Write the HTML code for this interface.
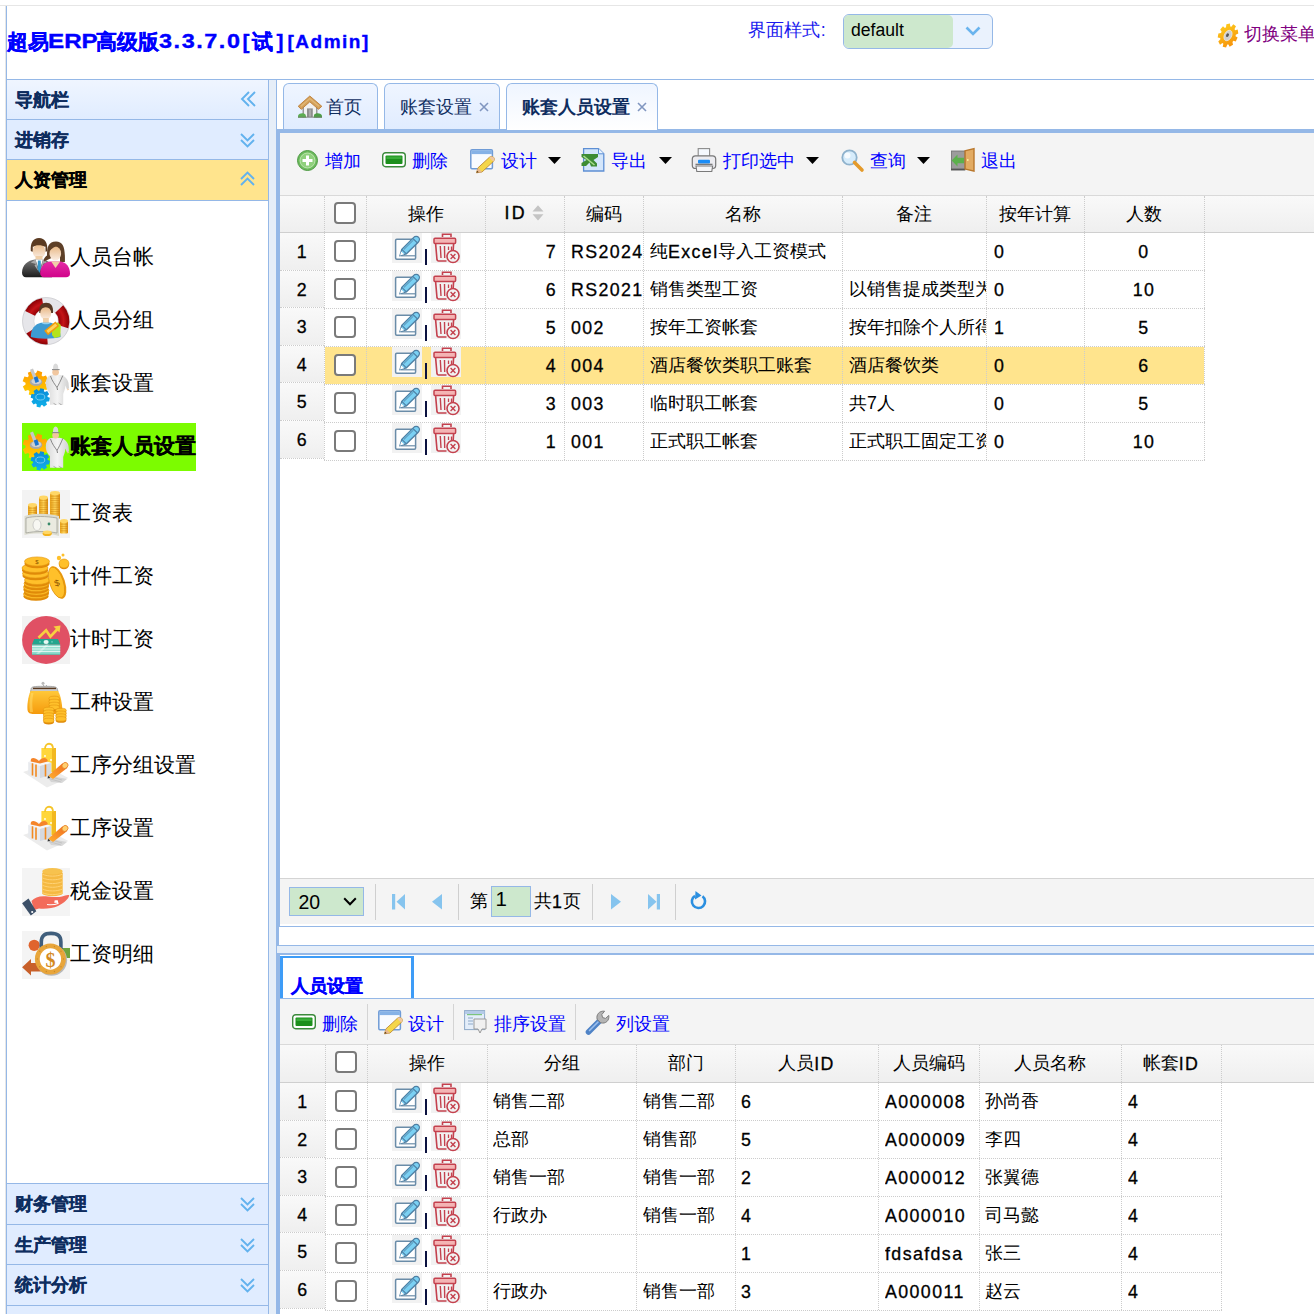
<!DOCTYPE html><html><head><meta charset="utf-8"><style>
html,body{margin:0;padding:0;width:1314px;height:1314px;overflow:hidden;background:#fff;font-family:"Liberation Sans",sans-serif;}
.t{position:absolute;white-space:nowrap;}
svg{overflow:visible}
</style></head><body>
<div style="position:absolute;left:0px;top:5px;width:1314px;height:1px;background:#e6e6e6"></div>
<div style="position:absolute;left:5px;top:5px;width:1px;height:1309px;background:#e6e6e6"></div>
<div style="position:absolute;left:6px;top:6px;width:1px;height:1308px;background:#95b8e7"></div>
<div style="position:absolute;left:6px;top:79px;width:1308px;height:1px;background:#95b8e7"></div>
<div style="position:absolute;white-space:nowrap;font-weight:bold;color:#0000ff;transform-origin:0 0;-webkit-text-stroke:0.35px #0000ff;left:7px;top:31px;font-size:21px;line-height:21px">超易</div>
<div style="position:absolute;white-space:nowrap;font-weight:bold;color:#0000ff;transform-origin:0 0;-webkit-text-stroke:0.35px #0000ff;left:47.7px;top:30.5px;font-size:19.5px;line-height:21px;transform:scaleX(1.24)">ERP</div>
<div style="position:absolute;white-space:nowrap;font-weight:bold;color:#0000ff;transform-origin:0 0;-webkit-text-stroke:0.35px #0000ff;left:95.5px;top:31px;font-size:21px;line-height:21px">高级版</div>
<div style="position:absolute;white-space:nowrap;font-weight:bold;color:#0000ff;transform-origin:0 0;-webkit-text-stroke:0.35px #0000ff;left:159px;top:30.5px;font-size:19.5px;line-height:21px;letter-spacing:1.3px;transform:scaleX(1.2)">3.3.7.0</div>
<div style="position:absolute;white-space:nowrap;font-weight:bold;color:#0000ff;transform-origin:0 0;-webkit-text-stroke:0.35px #0000ff;left:242.5px;top:30.5px;font-size:21px;line-height:21px;letter-spacing:3px">[试]</div>
<div style="position:absolute;white-space:nowrap;font-weight:bold;color:#0000ff;transform-origin:0 0;-webkit-text-stroke:0.35px #0000ff;left:287.5px;top:30.5px;font-size:19px;line-height:21px;letter-spacing:1.5px">[Admin]</div>
<div class="t" style="left:747.5px;top:22px;font-size:17.8px;line-height:17.8px;color:#1a1aee;letter-spacing:0.3px">界面样式:</div>
<div style="position:absolute;left:843px;top:14px;width:148px;height:33px;border:1px solid #95b8e7;border-radius:6px;background:#eaf2fd;box-sizing:content-box"></div>
<div style="position:absolute;left:844px;top:15px;width:109px;height:33px;background:#cde8cd;border-radius:5px 5px 5px 5px"></div>
<div class="t" style="left:851px;top:22px;font-size:17.6px;line-height:17.6px;color:#000">default</div>
<svg style="position:absolute;left:965px;top:26px" width="16" height="10" viewBox="0 0 16 10"><path d="M1.5 1.5 L8 8 L14.5 1.5" fill="none" stroke="#6ab4ee" stroke-width="2.6"/></svg>
<svg style="position:absolute;left:1216px;top:23px" width="24" height="25" viewBox="0 0 24 25"><defs><linearGradient id="gGear" x1="0" y1="0" x2="1" y2="1"><stop offset="0" stop-color="#ffd21e"/><stop offset="1" stop-color="#f58a0a"/></linearGradient></defs>
<g transform="translate(12,12.5) rotate(25) scale(0.78,1)"><path d="M9.15,-2.55 L12.31,-2.17 L12.31,2.17 L9.15,2.55 L8.65,3.92 L10.83,6.25 L8.03,9.58 L5.37,7.84 L4.10,8.57 L4.28,11.75 L0.00,12.50 L-0.93,9.45 L-2.36,9.20 L-4.28,11.75 L-8.03,9.58 L-6.79,6.65 L-7.72,5.53 L-10.83,6.25 L-12.31,2.17 L-9.47,0.73 L-9.47,-0.73 L-12.31,-2.17 L-10.83,-6.25 L-7.72,-5.53 L-6.79,-6.65 L-8.03,-9.58 L-4.28,-11.75 L-2.36,-9.20 L-0.93,-9.45 L-0.00,-12.50 L4.28,-11.75 L4.10,-8.57 L5.37,-7.84 L8.03,-9.58 L10.83,-6.25 L8.65,-3.92Z" fill="url(#gGear)"/></g>
<ellipse cx="12" cy="12.5" rx="3.6" ry="5.6" transform="rotate(28 12 12.5)" fill="#cfcfcf" stroke="#f0f0f0" stroke-width=".6"/>
<ellipse cx="11.5" cy="12.2" rx="1.3" ry="2" transform="rotate(28 11.5 12.2)" fill="#555"/></svg>
<div class="t" style="left:1244px;top:26px;font-size:17.8px;line-height:17.8px;color:#800080">切换菜单</div>
<div style="position:absolute;left:7px;top:80px;width:261px;height:39px;background:linear-gradient(to bottom,#eff5ff 0,#e0ecff 100%)"></div>
<div style="position:absolute;left:7px;top:119px;width:261px;height:1px;background:#95b8e7"></div>
<div class="t" style="left:15px;top:91.5px;font-size:17.7px;line-height:17.7px;font-weight:bold;color:#0e2d5f;-webkit-text-stroke:0.3px #0e2d5f">导航栏</div>
<svg style="position:absolute;left:240px;top:91px" width="17" height="16" viewBox="0 0 17 16"><path d="M9 1 L2 8 L9 15 M15 1 L8 8 L15 15" fill="none" stroke="#62b2ee" stroke-width="1.9"/></svg>
<div style="position:absolute;left:7px;top:120px;width:261px;height:39px;background:#e0ecff"></div>
<div style="position:absolute;left:7px;top:159px;width:261px;height:1px;background:#95b8e7"></div>
<div class="t" style="left:15px;top:131.5px;font-size:17.7px;line-height:17.7px;font-weight:bold;color:#0e2d5f;-webkit-text-stroke:0.3px #0e2d5f">进销存</div>
<svg style="position:absolute;left:240px;top:133px" width="15" height="15" viewBox="0 0 15 15"><path d="M1 1 L7.5 7.5 L14 1 M1 7 L7.5 13.5 L14 7" fill="none" stroke="#62b2ee" stroke-width="1.9"/></svg>
<div style="position:absolute;left:7px;top:160px;width:261px;height:40px;background:#ffe48d"></div>
<div style="position:absolute;left:7px;top:200px;width:261px;height:1px;background:#95b8e7"></div>
<div class="t" style="left:15px;top:171.5px;font-size:17.7px;line-height:17.7px;font-weight:bold;color:#000;-webkit-text-stroke:0.3px #000">人资管理</div>
<svg style="position:absolute;left:240px;top:171px" width="15" height="15" viewBox="0 0 15 15"><path d="M1 8 L7.5 1.5 L14 8 M1 14 L7.5 7.5 L14 14" fill="none" stroke="#62b2ee" stroke-width="1.9"/></svg>
<div style="position:absolute;left:7px;top:1184px;width:261px;height:40px;background:#e0ecff"></div>
<div style="position:absolute;left:7px;top:1224px;width:261px;height:1px;background:#95b8e7"></div>
<div class="t" style="left:15px;top:1195.5px;font-size:17.7px;line-height:17.7px;font-weight:bold;color:#0e2d5f;-webkit-text-stroke:0.3px #0e2d5f">财务管理</div>
<svg style="position:absolute;left:240px;top:1197px" width="15" height="15" viewBox="0 0 15 15"><path d="M1 1 L7.5 7.5 L14 1 M1 7 L7.5 13.5 L14 7" fill="none" stroke="#62b2ee" stroke-width="1.9"/></svg>
<div style="position:absolute;left:7px;top:1225px;width:261px;height:39px;background:#e0ecff"></div>
<div style="position:absolute;left:7px;top:1264px;width:261px;height:1px;background:#95b8e7"></div>
<div class="t" style="left:15px;top:1236.5px;font-size:17.7px;line-height:17.7px;font-weight:bold;color:#0e2d5f;-webkit-text-stroke:0.3px #0e2d5f">生产管理</div>
<svg style="position:absolute;left:240px;top:1238px" width="15" height="15" viewBox="0 0 15 15"><path d="M1 1 L7.5 7.5 L14 1 M1 7 L7.5 13.5 L14 7" fill="none" stroke="#62b2ee" stroke-width="1.9"/></svg>
<div style="position:absolute;left:7px;top:1265px;width:261px;height:40px;background:#e0ecff"></div>
<div style="position:absolute;left:7px;top:1305px;width:261px;height:1px;background:#95b8e7"></div>
<div class="t" style="left:15px;top:1276.5px;font-size:17.7px;line-height:17.7px;font-weight:bold;color:#0e2d5f;-webkit-text-stroke:0.3px #0e2d5f">统计分析</div>
<svg style="position:absolute;left:240px;top:1278px" width="15" height="15" viewBox="0 0 15 15"><path d="M1 1 L7.5 7.5 L14 1 M1 7 L7.5 13.5 L14 7" fill="none" stroke="#62b2ee" stroke-width="1.9"/></svg>
<div style="position:absolute;left:7px;top:1306px;width:261px;height:8px;background:#e0ecff"></div>
<div style="position:absolute;left:7px;top:1183px;width:261px;height:1px;background:#95b8e7"></div>
<div style="position:absolute;left:268px;top:80px;width:1px;height:1234px;background:#95b8e7"></div>
<div style="position:absolute;left:269px;top:80px;width:7px;height:1234px;background:#e6eef8"></div>
<svg width="0" height="0" style="position:absolute"><defs>
<linearGradient id="gSkin" x1="0" y1="0" x2="0" y2="1"><stop offset="0" stop-color="#e8b987"/><stop offset="1" stop-color="#fbeee4"/></linearGradient>
<linearGradient id="gSuit" x1="0" y1="0" x2="0" y2="1"><stop offset="0" stop-color="#777"/><stop offset="1" stop-color="#1b1b1b"/></linearGradient>
<linearGradient id="gGold" x1="0" y1="0" x2="1" y2="0"><stop offset="0" stop-color="#e9a21a"/><stop offset=".5" stop-color="#ffd55a"/><stop offset="1" stop-color="#d98a10"/></linearGradient>
<linearGradient id="gGoldV" x1="0" y1="0" x2="0" y2="1"><stop offset="0" stop-color="#ffce4a"/><stop offset="1" stop-color="#e9930f"/></linearGradient>
<linearGradient id="gOrGear" x1="0" y1="0" x2="0" y2="1"><stop offset="0" stop-color="#ff9a00"/><stop offset="1" stop-color="#ffd000"/></linearGradient>
<linearGradient id="gBlGear" x1="0" y1="0" x2="0" y2="1"><stop offset="0" stop-color="#0a8ad8"/><stop offset="1" stop-color="#10b0e8"/></linearGradient>
<linearGradient id="gWhite" x1="0" y1="0" x2="1" y2="0"><stop offset="0" stop-color="#d8d8d8"/><stop offset=".5" stop-color="#f4f4f4"/><stop offset="1" stop-color="#d0d0d0"/></linearGradient>
<linearGradient id="gMag" x1="0" y1="0" x2="0" y2="1"><stop offset="0" stop-color="#e42aa6"/><stop offset="1" stop-color="#d1048a"/></linearGradient>
<linearGradient id="gPurse" x1="0" y1="0" x2="0" y2="1"><stop offset="0" stop-color="#ffc83a"/><stop offset="1" stop-color="#f59a0c"/></linearGradient><linearGradient id="gPencil" x1="0" y1="1" x2="1" y2="0"><stop offset="0" stop-color="#ffb030"/><stop offset="1" stop-color="#f06a20"/></linearGradient>
<radialGradient id="gRed" cx="24.1" cy="24.1" r="23.3" gradientUnits="userSpaceOnUse"><stop offset=".5" stop-color="#8e0006"/><stop offset=".75" stop-color="#c41418"/><stop offset="1" stop-color="#8a0004"/></radialGradient>
<linearGradient id="gPanel" x1="0" y1="0" x2="0" y2="1"><stop offset="0" stop-color="#eff5ff"/><stop offset="1" stop-color="#e0ecff"/></linearGradient>
</defs></svg>
<svg style="position:absolute;left:22px;top:234px" width="48" height="48" viewBox="0 0 48 48">
<path d="M8.8,17 C8.3,9 11,4.1 17,4.1 C23,4.1 25.8,9 25.4,17 L23.5,18 L23.5,12.5 C21,11 15,10.5 10.8,12.5 L10.8,18Z" fill="#5a3b22"/>
<ellipse cx="17" cy="17.2" rx="6.3" ry="7.3" fill="url(#gSkin)"/>
<path d="M10.8,13 C13,10.8 20,10.6 23.4,13 L23.5,10 C21,7.5 13,7.5 10.8,10Z" fill="#5a3b22"/>
<rect x="13.5" y="22" width="7" height="4" fill="#f0cfa8"/>
<path d="M0,38.5 C0,31 6,26.2 13,25.4 L21,25.4 C26,26 30,30 30,36 L30,43.3 L4,43.3 C1.5,43.3 0,41.5 0,38.5Z" fill="url(#gSuit)"/>
<path d="M13.5,25.4 L17.3,37 L21,25.4Z" fill="#fff"/>
<path d="M8.8,28.5 L13.5,25.4 L16.3,37 L12.5,31.5 L14,30Z M25,28.5 L21,25.4 L18.3,37 L22,31.5 L20.5,30Z" fill="#a9a9a9"/>
<path d="M15.9,26.5 L18.7,26.5 L19,34.5 L17.3,39 L15.6,34.5Z" fill="#3597c9"/>
<path d="M22,27.5 C21,25 23.5,22.5 25,21.5 C25,13 26.5,7.5 34,7.5 C41.5,7.5 43.3,14 42.9,28 L38,28 L38,20Z" fill="#5e4028"/>
<ellipse cx="33.3" cy="19.5" rx="5.8" ry="7" fill="url(#gSkin)"/>
<path d="M27.3,17.5 C29,14.5 33,12.8 36.5,10.5 L38.5,14 C38,10 35,9 32,9.5 C29,10.5 27.3,13 27.3,17.5Z" fill="#5e4028"/>
<path d="M18.2,39 C18.2,32 23,28 28,27.5 L38.5,27.5 C44,28 48,33 48,39.5 C48,42 46.5,43.3 44,43.3 L22,43.3 C19.5,43.3 18.2,41.5 18.2,39Z" fill="url(#gMag)"/>
<path d="M29.2,27.5 L33.5,34 L38.2,27.5Z" fill="#f0cfa8"/>
</svg>
<div class="t" style="left:69.5px;top:246.5px;font-size:20.6px;line-height:20.6px;color:#000">人员台帐</div>
<svg style="position:absolute;left:22px;top:297px" width="48" height="48" viewBox="0 0 48 48"><circle cx="24.1" cy="24.1" r="23.6" fill="#e6e6ea" stroke="#c4c4c8" stroke-width=".7"/><circle cx="24.1" cy="24.1" r="12.2" fill="#fff" stroke="#d0d0d4" stroke-width=".6"/><path d="M3.16,13.89 A23.3,23.3 0 0 1 20.05,1.15 L21.95,11.89 A12.4,12.4 0 0 0 12.95,18.66 Z" fill="url(#gRed)"/><path d="M41.14,8.21 A23.3,23.3 0 0 1 46.26,31.30 L35.89,27.93 A12.4,12.4 0 0 0 33.17,15.64 Z" fill="url(#gRed)"/><path d="M25.73,47.34 A23.3,23.3 0 0 1 4.34,36.45 L13.58,30.67 A12.4,12.4 0 0 0 24.96,36.47 Z" fill="url(#gRed)"/><path d="M17.3,16 C16.8,9 19,5.8 24.1,5.8 C29.2,5.8 31.5,9 31,16Z" fill="#573a25"/>
<ellipse cx="23.7" cy="16.3" rx="5.5" ry="6.3" fill="url(#gSkin)"/>
<path d="M18.5,12 C21,9.8 27,9.8 29.3,12 L29.5,9.5 C27,7 21,7 18.3,9.5Z" fill="#573a25"/>
<rect x="21" y="21" width="5.8" height="5" fill="#f0cfa8"/>
<path d="M8.8,40 C8.8,32 13,27 19,25.8 L29,25.8 C34,27 38.3,32 38.6,40 C30,42.3 17,42.3 8.8,40Z" fill="#3d9ad2"/>
<path d="M19.5,25.8 C21,27.8 27,27.8 28.5,25.8Z" fill="#8fd0f2"/>
<path d="M30,27 L36,25.5 L38.8,28 L38.3,39.5 L32.5,41 L30,38Z" fill="#b4e41c"/>
<path d="M22.2,33.8 L33.5,24.6 L37.2,29 L26,38.3Z" fill="#f39a0c"/>
<path d="M24.4,33.7 L33.4,26.5 L35.2,28.7 L26.2,35.9Z" fill="#ffd35c"/>
</svg>
<div class="t" style="left:69.5px;top:309.5px;font-size:20.6px;line-height:20.6px;color:#000">人员分组</div>
<svg style="position:absolute;left:22px;top:360px" width="48" height="48" viewBox="0 0 48 48"><path d="M23.49,23.74 L26.35,25.29 L24.61,30.05 L21.42,29.40 L20.26,30.67 L21.18,33.79 L16.58,35.93 L14.79,33.22 L13.06,33.29 L11.51,36.15 L6.75,34.41 L7.40,31.22 L6.13,30.06 L3.01,30.98 L0.87,26.38 L3.58,24.59 L3.51,22.86 L0.65,21.31 L2.39,16.55 L5.58,17.20 L6.74,15.93 L5.82,12.81 L10.42,10.67 L12.21,13.38 L13.94,13.31 L15.49,10.45 L20.25,12.19 L19.60,15.38 L20.87,16.54 L23.99,15.62 L26.13,20.22 L23.42,22.01Z" fill="url(#gOrGear)"/><path d="M25.66,37.01 L27.90,37.84 L27.16,41.51 L24.77,41.39 L24.06,42.45 L25.06,44.61 L21.94,46.68 L20.34,44.91 L19.09,45.16 L18.26,47.40 L14.59,46.66 L14.71,44.27 L13.65,43.56 L11.49,44.56 L9.42,41.44 L11.19,39.84 L10.94,38.59 L8.70,37.76 L9.44,34.09 L11.83,34.21 L12.54,33.15 L11.54,30.99 L14.66,28.92 L16.26,30.69 L17.51,30.44 L18.34,28.20 L22.01,28.94 L21.89,31.33 L22.95,32.04 L25.11,31.04 L27.18,34.16 L25.41,35.76Z" fill="url(#gBlGear)"/><ellipse cx="18.3" cy="37" rx="4.5" ry="3" fill="none" stroke="#8fd4f2" stroke-width=".8"/><ellipse cx="14" cy="22" rx="6.3" ry="4" fill="#a9a9a9"/><ellipse cx="14.3" cy="21.3" rx="4.8" ry="2.8" fill="#d0d0d0"/><path d="M8,9.8 L11,8.4 L16,21 L13,22.4Z" fill="#c8c8c8"/><path d="M11.8,17.6 L15.3,16.2 L17,21.5 L13.5,23Z" fill="#1a74d0"/><path d="M24,26 C23,19 26,15 31,14.8 L37,14.8 C42,15 45.5,18.5 46.5,23 L47,28.5 L44.8,29.2 L43.5,25.5 C43,30 41.8,32 41.2,34 L41.2,44.7 L28,44.7 L28,33 C26,31.5 24.5,29 24,26Z" fill="url(#gWhite)"/><circle cx="33.6" cy="12.2" r="3.3" fill="#f1c7a0"/><path d="M31,9.5 C30.8,5.5 32,3.5 33.6,3.5 C35.3,3.5 36.5,5.5 36.3,9.5Z" fill="#dadada"/><path d="M30,9.6 L37.6,9.6" stroke="#8a8a8a" stroke-width="1.1"/><path d="M28.5,16 C30,21 33,24.5 35,27.5 C36.5,25 39,20 40.8,15.5" fill="none" stroke="#707070" stroke-width=".8"/><path d="M35,27.5 L35.5,30" stroke="#707070" stroke-width=".9"/><path d="M45,28.5 L47.3,29.3 L45.6,30.6Z" fill="#f1c7a0"/><path d="M30.5,42.5 L33,44.8 L35,44.8Z M36,42.5 L38.5,44.8 L40.5,44.8Z" fill="#9a9a9a"/></svg>
<div class="t" style="left:69.5px;top:372.5px;font-size:20.6px;line-height:20.6px;color:#000">账套设置</div>
<div style="position:absolute;left:22px;top:423px;width:174px;height:48px;background:#7cfc00"></div>
<svg style="position:absolute;left:22px;top:423px" width="48" height="48" viewBox="0 0 48 48"><path d="M23.49,23.74 L26.35,25.29 L24.61,30.05 L21.42,29.40 L20.26,30.67 L21.18,33.79 L16.58,35.93 L14.79,33.22 L13.06,33.29 L11.51,36.15 L6.75,34.41 L7.40,31.22 L6.13,30.06 L3.01,30.98 L0.87,26.38 L3.58,24.59 L3.51,22.86 L0.65,21.31 L2.39,16.55 L5.58,17.20 L6.74,15.93 L5.82,12.81 L10.42,10.67 L12.21,13.38 L13.94,13.31 L15.49,10.45 L20.25,12.19 L19.60,15.38 L20.87,16.54 L23.99,15.62 L26.13,20.22 L23.42,22.01Z" fill="url(#gOrGear)"/><path d="M25.66,37.01 L27.90,37.84 L27.16,41.51 L24.77,41.39 L24.06,42.45 L25.06,44.61 L21.94,46.68 L20.34,44.91 L19.09,45.16 L18.26,47.40 L14.59,46.66 L14.71,44.27 L13.65,43.56 L11.49,44.56 L9.42,41.44 L11.19,39.84 L10.94,38.59 L8.70,37.76 L9.44,34.09 L11.83,34.21 L12.54,33.15 L11.54,30.99 L14.66,28.92 L16.26,30.69 L17.51,30.44 L18.34,28.20 L22.01,28.94 L21.89,31.33 L22.95,32.04 L25.11,31.04 L27.18,34.16 L25.41,35.76Z" fill="url(#gBlGear)"/><ellipse cx="18.3" cy="37" rx="4.5" ry="3" fill="none" stroke="#8fd4f2" stroke-width=".8"/><ellipse cx="14" cy="22" rx="6.3" ry="4" fill="#a9a9a9"/><ellipse cx="14.3" cy="21.3" rx="4.8" ry="2.8" fill="#d0d0d0"/><path d="M8,9.8 L11,8.4 L16,21 L13,22.4Z" fill="#c8c8c8"/><path d="M11.8,17.6 L15.3,16.2 L17,21.5 L13.5,23Z" fill="#1a74d0"/><path d="M24,26 C23,19 26,15 31,14.8 L37,14.8 C42,15 45.5,18.5 46.5,23 L47,28.5 L44.8,29.2 L43.5,25.5 C43,30 41.8,32 41.2,34 L41.2,44.7 L28,44.7 L28,33 C26,31.5 24.5,29 24,26Z" fill="url(#gWhite)"/><circle cx="33.6" cy="12.2" r="3.3" fill="#f1c7a0"/><path d="M31,9.5 C30.8,5.5 32,3.5 33.6,3.5 C35.3,3.5 36.5,5.5 36.3,9.5Z" fill="#dadada"/><path d="M30,9.6 L37.6,9.6" stroke="#8a8a8a" stroke-width="1.1"/><path d="M28.5,16 C30,21 33,24.5 35,27.5 C36.5,25 39,20 40.8,15.5" fill="none" stroke="#707070" stroke-width=".8"/><path d="M35,27.5 L35.5,30" stroke="#707070" stroke-width=".9"/><path d="M45,28.5 L47.3,29.3 L45.6,30.6Z" fill="#f1c7a0"/><path d="M30.5,42.5 L33,44.8 L35,44.8Z M36,42.5 L38.5,44.8 L40.5,44.8Z" fill="#9a9a9a"/></svg>
<div class="t" style="left:69.5px;top:435.5px;font-size:20.6px;line-height:20.6px;font-weight:bold;color:#000;-webkit-text-stroke:0.3px #000">账套人员设置</div>
<svg style="position:absolute;left:22px;top:490px" width="48" height="48" viewBox="0 0 48 48"><rect x="0" y="0" width="48" height="48" fill="#f3f3f3"/><rect x="6" y="15" width="9" height="12" rx="1.3499999999999999" fill="url(#gGold)"/><line x1="6.5" y1="16.0" x2="14.5" y2="16.0" stroke="#c47a08" stroke-width="0.6" opacity=".7"/><line x1="6.5" y1="18.2" x2="14.5" y2="18.2" stroke="#c47a08" stroke-width="0.6" opacity=".7"/><line x1="6.5" y1="20.4" x2="14.5" y2="20.4" stroke="#c47a08" stroke-width="0.6" opacity=".7"/><line x1="6.5" y1="22.6" x2="14.5" y2="22.6" stroke="#c47a08" stroke-width="0.6" opacity=".7"/><line x1="6.5" y1="24.8" x2="14.5" y2="24.8" stroke="#c47a08" stroke-width="0.6" opacity=".7"/><ellipse cx="10.5" cy="15" rx="4.5" ry="2" fill="#ffd766"/><rect x="17" y="7.5" width="9" height="19.5" rx="1.3499999999999999" fill="url(#gGold)"/><line x1="17.5" y1="8.5" x2="25.5" y2="8.5" stroke="#c47a08" stroke-width="0.6" opacity=".7"/><line x1="17.5" y1="10.7" x2="25.5" y2="10.7" stroke="#c47a08" stroke-width="0.6" opacity=".7"/><line x1="17.5" y1="12.9" x2="25.5" y2="12.9" stroke="#c47a08" stroke-width="0.6" opacity=".7"/><line x1="17.5" y1="15.1" x2="25.5" y2="15.1" stroke="#c47a08" stroke-width="0.6" opacity=".7"/><line x1="17.5" y1="17.3" x2="25.5" y2="17.3" stroke="#c47a08" stroke-width="0.6" opacity=".7"/><line x1="17.5" y1="19.5" x2="25.5" y2="19.5" stroke="#c47a08" stroke-width="0.6" opacity=".7"/><line x1="17.5" y1="21.7" x2="25.5" y2="21.7" stroke="#c47a08" stroke-width="0.6" opacity=".7"/><line x1="17.5" y1="23.9" x2="25.5" y2="23.9" stroke="#c47a08" stroke-width="0.6" opacity=".7"/><ellipse cx="21.5" cy="7.5" rx="4.5" ry="2" fill="#ffd766"/><rect x="28" y="3" width="10" height="26" rx="1.5" fill="url(#gGold)"/><line x1="28.5" y1="4.0" x2="37.5" y2="4.0" stroke="#c47a08" stroke-width="0.6" opacity=".7"/><line x1="28.5" y1="6.2" x2="37.5" y2="6.2" stroke="#c47a08" stroke-width="0.6" opacity=".7"/><line x1="28.5" y1="8.4" x2="37.5" y2="8.4" stroke="#c47a08" stroke-width="0.6" opacity=".7"/><line x1="28.5" y1="10.6" x2="37.5" y2="10.6" stroke="#c47a08" stroke-width="0.6" opacity=".7"/><line x1="28.5" y1="12.8" x2="37.5" y2="12.8" stroke="#c47a08" stroke-width="0.6" opacity=".7"/><line x1="28.5" y1="15.0" x2="37.5" y2="15.0" stroke="#c47a08" stroke-width="0.6" opacity=".7"/><line x1="28.5" y1="17.2" x2="37.5" y2="17.2" stroke="#c47a08" stroke-width="0.6" opacity=".7"/><line x1="28.5" y1="19.4" x2="37.5" y2="19.4" stroke="#c47a08" stroke-width="0.6" opacity=".7"/><line x1="28.5" y1="21.6" x2="37.5" y2="21.6" stroke="#c47a08" stroke-width="0.6" opacity=".7"/><line x1="28.5" y1="23.8" x2="37.5" y2="23.8" stroke="#c47a08" stroke-width="0.6" opacity=".7"/><line x1="28.5" y1="26.0" x2="37.5" y2="26.0" stroke="#c47a08" stroke-width="0.6" opacity=".7"/><ellipse cx="33.0" cy="3" rx="5.0" ry="2" fill="#ffd766"/><path d="M2.5,26 C12,23 24,23 37,26 L37,46 C26,43 12,43 2.5,45Z" fill="#dcdcd0"/>
<path d="M4,28 C12,26 24,26 35,28 L35,43 C25,41 13,41 4,43Z" fill="#eaeae0" stroke="#9a9a90" stroke-width=".7"/>
<ellipse cx="15" cy="35" rx="4" ry="5.5" fill="#f7f7f2" stroke="#aaa" stroke-width=".5"/>
<circle cx="27" cy="34" r="1.4" fill="#3a8a6a"/><rect x="38" y="31" width="8" height="12.5" rx="1.2" fill="url(#gGold)"/><line x1="38.5" y1="32.0" x2="45.5" y2="32.0" stroke="#c47a08" stroke-width="0.6" opacity=".7"/><line x1="38.5" y1="34.2" x2="45.5" y2="34.2" stroke="#c47a08" stroke-width="0.6" opacity=".7"/><line x1="38.5" y1="36.4" x2="45.5" y2="36.4" stroke="#c47a08" stroke-width="0.6" opacity=".7"/><line x1="38.5" y1="38.6" x2="45.5" y2="38.6" stroke="#c47a08" stroke-width="0.6" opacity=".7"/><line x1="38.5" y1="40.8" x2="45.5" y2="40.8" stroke="#c47a08" stroke-width="0.6" opacity=".7"/><ellipse cx="42.0" cy="31" rx="4.0" ry="2" fill="#ffd766"/><ellipse cx="25.2" cy="43.5" rx="4.6" ry="2.6" fill="#f2b21c"/><ellipse cx="25.2" cy="42.3" rx="4.4" ry="1.8" fill="#ffd766"/></svg>
<div class="t" style="left:69.5px;top:502.5px;font-size:20.6px;line-height:20.6px;color:#000">工资表</div>
<svg style="position:absolute;left:22px;top:553px" width="48" height="48" viewBox="0 0 48 48"><ellipse cx="14" cy="43.2" rx="12.5" ry="4.5" fill="#e08a08"/><ellipse cx="14" cy="41" rx="12.5" ry="4.5" fill="#ffc02a" stroke="#e39510" stroke-width=".6"/><ellipse cx="14.5" cy="39.7" rx="12.5" ry="4.5" fill="#e08a08"/><ellipse cx="14.5" cy="37.5" rx="12.5" ry="4.5" fill="#ffc02a" stroke="#e39510" stroke-width=".6"/><ellipse cx="14" cy="36.2" rx="12.5" ry="4.5" fill="#e08a08"/><ellipse cx="14" cy="34" rx="12.5" ry="4.5" fill="#ffc02a" stroke="#e39510" stroke-width=".6"/><ellipse cx="14.5" cy="32.7" rx="12.5" ry="4.5" fill="#e08a08"/><ellipse cx="14.5" cy="30.5" rx="12.5" ry="4.5" fill="#ffc02a" stroke="#e39510" stroke-width=".6"/><ellipse cx="15" cy="29.2" rx="12.5" ry="4.5" fill="#e08a08"/><ellipse cx="15" cy="27" rx="12.5" ry="4.5" fill="#ffc02a" stroke="#e39510" stroke-width=".6"/><ellipse cx="13.5" cy="22.7" rx="13" ry="4.5" fill="#e08a08"/><ellipse cx="13.5" cy="20.5" rx="13" ry="4.5" fill="#ffc02a" stroke="#e39510" stroke-width=".6"/><ellipse cx="13" cy="17.2" rx="13" ry="4.5" fill="#e08a08"/><ellipse cx="13" cy="15" rx="13" ry="4.5" fill="#ffc02a" stroke="#e39510" stroke-width=".6"/><ellipse cx="15" cy="10.7" rx="12.5" ry="4.6" fill="#e08a08"/><ellipse cx="15" cy="8.5" rx="12.5" ry="4.6" fill="#ffc02a" stroke="#e39510" stroke-width=".6"/><text x="15" y="11" font-size="6" text-anchor="middle" fill="#8a5200" font-family="Liberation Sans">$</text><ellipse cx="35.5" cy="29.5" rx="7.5" ry="17" transform="rotate(-18 35.5 29.5)" fill="#ea9a10"/><ellipse cx="34.5" cy="29.5" rx="6.8" ry="16" transform="rotate(-18 34.5 29.5)" fill="#ffc02a" stroke="#d88a08" stroke-width=".6"/><text x="35" y="33" font-size="9" text-anchor="middle" fill="#8a5200" font-family="Liberation Sans" transform="rotate(-18 35 30)">$</text><ellipse cx="42" cy="11.7" rx="5" ry="4.5" fill="#e08a08"/><ellipse cx="42" cy="10.5" rx="5" ry="4.5" fill="#ffc02a" stroke="#e39510" stroke-width=".6"/><circle cx="37" cy="5" r="2.2" fill="#ffc02a"/><circle cx="41" cy="2" r="1.5" fill="#ffc02a"/></svg>
<div class="t" style="left:69.5px;top:565.5px;font-size:20.6px;line-height:20.6px;color:#000">计件工资</div>
<svg style="position:absolute;left:22px;top:616px" width="48" height="48" viewBox="0 0 48 48"><clipPath id="cc"><rect x="0" y="0" width="48" height="48"/></clipPath><rect x="0" y="0" width="48" height="48" fill="#f2f2f2"/><circle cx="24.1" cy="23.9" r="24" fill="#e05064"/><path d="M16.5,21.8 L24.1,14.3 L28.4,20.7 L35.5,13" fill="none" stroke="#f8d040" stroke-width="2.6" stroke-linejoin="miter"/><path d="M31.5,10.5 L38.5,9.5 L37.5,16.5Z" fill="#f8d040"/><path d="M10,28.4 L38.2,28.4 L38.2,38.3 L10,38.3Z" fill="#8edccd"/><path d="M10,30.6 L38.2,30.6 M10,33 L38.2,33 M10,35.4 L38.2,35.4" stroke="#e9f8f4" stroke-width="1"/><path d="M10,38.3 L38.2,38.3" stroke="#5cc4b0" stroke-width="1"/><path d="M12.2,22.9 L36,22.9 L38.2,28.4 L10,28.4Z" fill="#23a58e"/><ellipse cx="24.1" cy="25.9" rx="2.6" ry="2" fill="#e9f8f4"/><path d="M17,25.9 L19,25.9 M29,25.9 L31,25.9" stroke="#8edccd" stroke-width=".8"/><path d="M14,38 L24,28.6 L27,28.6 L17,38Z" fill="#fff" opacity=".35"/></svg>
<div class="t" style="left:69.5px;top:628.5px;font-size:20.6px;line-height:20.6px;color:#000">计时工资</div>
<svg style="position:absolute;left:22px;top:679px" width="48" height="48" viewBox="0 0 48 48"><path d="M9,10.5 C9,7.5 12,7.3 22,7.3 C32,7.3 35,7.5 35.5,10.5 L36,13 L8.5,13Z" fill="#c9c9c9" stroke="#9a9a9a" stroke-width=".8"/><path d="M11,9.4 L34,9.4" stroke="#5a3a20" stroke-width="1.4"/><circle cx="21" cy="4.3" r="1.5" fill="#bbb"/><path d="M21,5.5 L22.5,8 M24,6 L26,8.5" stroke="#aaa" stroke-width="1"/><path d="M8.5,12 C6,18 5,26 5.5,31 C6,34 8,35 12,35 L33,35 C38,35 40.5,33.5 40.3,30 C40,25 39,17 36,12Z" fill="url(#gPurse)"/><path d="M9,14 C7.5,20 7,27 8,33 L11,33 C10,27 10,20 11.5,14Z" fill="#ffe070" opacity=".5"/><ellipse cx="32.2" cy="21.1" rx="5.3" ry="2.3" fill="#e08a08"/><ellipse cx="32.2" cy="19.5" rx="5.3" ry="2.3" fill="#ffc02a" stroke="#e39510" stroke-width=".6"/><ellipse cx="32.2" cy="24.1" rx="5.3" ry="2.3" fill="#e08a08"/><ellipse cx="32.2" cy="22.5" rx="5.3" ry="2.3" fill="#ffc02a" stroke="#e39510" stroke-width=".6"/><ellipse cx="32.2" cy="27.1" rx="5.3" ry="2.3" fill="#e08a08"/><ellipse cx="32.2" cy="25.5" rx="5.3" ry="2.3" fill="#ffc02a" stroke="#e39510" stroke-width=".6"/><ellipse cx="32.2" cy="29.900000000000002" rx="5.3" ry="2.3" fill="#e08a08"/><ellipse cx="32.2" cy="28.3" rx="5.3" ry="2.3" fill="#ffc02a" stroke="#e39510" stroke-width=".6"/><ellipse cx="39" cy="33.1" rx="5.3" ry="2.3" fill="#e08a08"/><ellipse cx="39" cy="31.5" rx="5.3" ry="2.3" fill="#ffc02a" stroke="#e39510" stroke-width=".6"/><ellipse cx="39" cy="35.9" rx="5.3" ry="2.3" fill="#e08a08"/><ellipse cx="39" cy="34.3" rx="5.3" ry="2.3" fill="#ffc02a" stroke="#e39510" stroke-width=".6"/><ellipse cx="39" cy="38.7" rx="5.3" ry="2.3" fill="#e08a08"/><ellipse cx="39" cy="37.1" rx="5.3" ry="2.3" fill="#ffc02a" stroke="#e39510" stroke-width=".6"/><ellipse cx="39" cy="41.5" rx="5.3" ry="2.3" fill="#e08a08"/><ellipse cx="39" cy="39.9" rx="5.3" ry="2.3" fill="#ffc02a" stroke="#e39510" stroke-width=".6"/><ellipse cx="26.7" cy="32.1" rx="5.3" ry="2.3" fill="#e08a08"/><ellipse cx="26.7" cy="30.5" rx="5.3" ry="2.3" fill="#ffc02a" stroke="#e39510" stroke-width=".6"/><ellipse cx="26.7" cy="34.9" rx="5.3" ry="2.3" fill="#e08a08"/><ellipse cx="26.7" cy="33.3" rx="5.3" ry="2.3" fill="#ffc02a" stroke="#e39510" stroke-width=".6"/><ellipse cx="26.7" cy="37.7" rx="5.3" ry="2.3" fill="#e08a08"/><ellipse cx="26.7" cy="36.1" rx="5.3" ry="2.3" fill="#ffc02a" stroke="#e39510" stroke-width=".6"/><ellipse cx="26.7" cy="40.5" rx="5.3" ry="2.3" fill="#e08a08"/><ellipse cx="26.7" cy="38.9" rx="5.3" ry="2.3" fill="#ffc02a" stroke="#e39510" stroke-width=".6"/><ellipse cx="26.7" cy="43.1" rx="5.3" ry="2.3" fill="#e08a08"/><ellipse cx="26.7" cy="41.5" rx="5.3" ry="2.3" fill="#ffc02a" stroke="#e39510" stroke-width=".6"/></svg>
<div class="t" style="left:69.5px;top:691.5px;font-size:20.6px;line-height:20.6px;color:#000">工种设置</div>
<svg style="position:absolute;left:22px;top:742px" width="48" height="48" viewBox="0 0 48 48"><path d="M1.1,30.1 L22,23 L46.3,36 L25,45.4Z" fill="#ececec"/><path d="M24,33 L45,37 L40,41 L29,40Z" fill="#d0d0d0" opacity=".8"/><path d="M26,34 L40,38 M27,36.5 L39,40" stroke="#b8b8b8" stroke-width=".6"/><path d="M19.4,6 L34,6 L34,30 L19.4,30Z" fill="#ffd63a"/><path d="M30,6 L34,6 L34,30 L30,30Z" fill="#f2b820"/><path d="M23,7 C23,0 31,0 31,7" fill="none" stroke="#f5c52a" stroke-width="1.8"/><circle cx="23" cy="14" r=".9" fill="#fff"/><circle cx="29" cy="18" r=".9" fill="#fff"/><path d="M6.2,20 L17.5,17 L29.2,21 L29.2,33 L18,36 L6.2,32Z" fill="#e8eaee"/><path d="M6.2,20 L17.5,17 L29.2,21 L18,24Z" fill="#f6f7f9"/><path d="M18,24 L29.2,21 L29.2,33 L18,36Z" fill="#d5d9e0"/><path d="M10.5,21.3 L10.5,33.5 M14,22.5 L14,34.8" stroke="#f28a20" stroke-width="1.6"/><path d="M23.5,22.5 L23.5,34.5" stroke="#f28a20" stroke-width="1.6"/><path d="M8.8,19.5 C8,15 13,15 17,19 C20,14.5 26,15.5 25.8,19.5 L18,21.5Z" fill="#f5852a"/><path d="M26.2,33.8 L40.5,21.2 L45.5,25.8 L31,37Z" fill="url(#gPencil)"/><ellipse cx="43" cy="23.5" rx="2.8" ry="3.2" transform="rotate(42 43 23.5)" fill="#ffd070" stroke="#e8822a" stroke-width=".8"/><path d="M26.2,33.8 L25.5,36.5 L28.3,35.8Z" fill="#333"/></svg>
<div class="t" style="left:69.5px;top:754.5px;font-size:20.6px;line-height:20.6px;color:#000">工序分组设置</div>
<svg style="position:absolute;left:22px;top:805px" width="48" height="48" viewBox="0 0 48 48"><path d="M1.1,30.1 L22,23 L46.3,36 L25,45.4Z" fill="#ececec"/><path d="M24,33 L45,37 L40,41 L29,40Z" fill="#d0d0d0" opacity=".8"/><path d="M26,34 L40,38 M27,36.5 L39,40" stroke="#b8b8b8" stroke-width=".6"/><path d="M19.4,6 L34,6 L34,30 L19.4,30Z" fill="#ffd63a"/><path d="M30,6 L34,6 L34,30 L30,30Z" fill="#f2b820"/><path d="M23,7 C23,0 31,0 31,7" fill="none" stroke="#f5c52a" stroke-width="1.8"/><circle cx="23" cy="14" r=".9" fill="#fff"/><circle cx="29" cy="18" r=".9" fill="#fff"/><path d="M6.2,20 L17.5,17 L29.2,21 L29.2,33 L18,36 L6.2,32Z" fill="#e8eaee"/><path d="M6.2,20 L17.5,17 L29.2,21 L18,24Z" fill="#f6f7f9"/><path d="M18,24 L29.2,21 L29.2,33 L18,36Z" fill="#d5d9e0"/><path d="M10.5,21.3 L10.5,33.5 M14,22.5 L14,34.8" stroke="#f28a20" stroke-width="1.6"/><path d="M23.5,22.5 L23.5,34.5" stroke="#f28a20" stroke-width="1.6"/><path d="M8.8,19.5 C8,15 13,15 17,19 C20,14.5 26,15.5 25.8,19.5 L18,21.5Z" fill="#f5852a"/><path d="M26.2,33.8 L40.5,21.2 L45.5,25.8 L31,37Z" fill="url(#gPencil)"/><ellipse cx="43" cy="23.5" rx="2.8" ry="3.2" transform="rotate(42 43 23.5)" fill="#ffd070" stroke="#e8822a" stroke-width=".8"/><path d="M26.2,33.8 L25.5,36.5 L28.3,35.8Z" fill="#333"/></svg>
<div class="t" style="left:69.5px;top:817.5px;font-size:20.6px;line-height:20.6px;color:#000">工序设置</div>
<svg style="position:absolute;left:22px;top:868px" width="48" height="48" viewBox="0 0 48 48"><rect x="0" y="0" width="48" height="48" fill="#f4f4f4"/><rect x="20.2" y="2.2" width="20.5" height="26" rx="10.25" ry="3" fill="#f5b942"/><path d="M20.4,6.2 C26,8.8 35,8.8 40.5,6.2" fill="none" stroke="#ffd274" stroke-width="1"/><path d="M20.4,9.9 C26,12.5 35,12.5 40.5,9.9" fill="none" stroke="#ffd274" stroke-width="1"/><path d="M20.4,13.6 C26,16.2 35,16.2 40.5,13.6" fill="none" stroke="#ffd274" stroke-width="1"/><path d="M20.4,17.3 C26,19.9 35,19.9 40.5,17.3" fill="none" stroke="#ffd274" stroke-width="1"/><path d="M20.4,21.0 C26,23.6 35,23.6 40.5,21.0" fill="none" stroke="#ffd274" stroke-width="1"/><path d="M20.4,24.7 C26,27.3 35,27.3 40.5,24.7" fill="none" stroke="#ffd274" stroke-width="1"/><ellipse cx="30.45" cy="3.3" rx="10.25" ry="3.2" fill="#f7c24e"/><path d="M9.5,33 C13,28.5 19,27.5 26,28.5 C31,29 36,29.5 40,28.5 C43,27.5 45.5,26.5 47.2,27.2 C47,30.5 42,35 36,38 C31,40.5 23,41 17,40.5 L12,42Z" fill="#f36b5a"/><path d="M25,36.5 C29,37 33,36.8 36,35.5 L35.2,33.3 L33,33.2 L33,35" fill="none" stroke="#fff" stroke-width="1.1"/><path d="M33,32.5 L35.7,32.2 L36.2,34.5 L33.5,35Z" fill="#fff"/><path d="M0.1,35.2 L6.5,30.5 L14.3,43.2 L8.8,47.6Z" fill="#3c5068"/><circle cx="10.2" cy="44" r="1.1" fill="#fff"/></svg>
<div class="t" style="left:69.5px;top:880.5px;font-size:20.6px;line-height:20.6px;color:#000">税金设置</div>
<svg style="position:absolute;left:22px;top:931px" width="48" height="48" viewBox="0 0 48 48"><rect x="0" y="0" width="48" height="48" fill="#f4f4f4"/><circle cx="12.2" cy="14.3" r="5.6" fill="#e0642e"/><rect x="39.8" y="17" width="8.2" height="10" fill="#6fa33c"/><path d="M19.3,20 L19.3,11 C19.3,4.5 22.5,2.4 29,2.4 C35.5,2.4 38.9,4.5 38.9,11 L38.9,20" fill="none" stroke="#3f5e7c" stroke-width="3.6"/><path d="M0.1,36.2 L9,28 L9,32 L19,32 L19,40.5 L9,40.5 L9,44.4Z" fill="#c8602a"/><circle cx="29.6" cy="29.3" r="15.5" fill="#b9b9b9"/><circle cx="28.4" cy="28" r="15.5" fill="#e8a53a"/><circle cx="28.4" cy="28" r="10.7" fill="#fff"/><circle cx="41.50" cy="28.00" r=".7" fill="#c98a2a"/><circle cx="39.00" cy="35.70" r=".7" fill="#c98a2a"/><circle cx="32.45" cy="40.46" r=".7" fill="#c98a2a"/><circle cx="24.35" cy="40.46" r=".7" fill="#c98a2a"/><circle cx="17.80" cy="35.70" r=".7" fill="#c98a2a"/><circle cx="15.30" cy="28.00" r=".7" fill="#c98a2a"/><circle cx="17.80" cy="20.30" r=".7" fill="#c98a2a"/><circle cx="24.35" cy="15.54" r=".7" fill="#c98a2a"/><circle cx="32.45" cy="15.54" r=".7" fill="#c98a2a"/><circle cx="39.00" cy="20.30" r=".7" fill="#c98a2a"/><text x="28.4" y="35.8" font-size="20" font-weight="bold" text-anchor="middle" fill="#d48a1e" font-family="Liberation Serif">$</text></svg>
<div class="t" style="left:69.5px;top:943.5px;font-size:20.6px;line-height:20.6px;color:#000">工资明细</div>
<div style="position:absolute;left:276px;top:80px;width:1px;height:1234px;background:#95b8e7"></div>
<div style="position:absolute;left:283px;top:83px;width:93px;height:46px;border:1px solid #95b8e7;border-bottom:0;border-radius:6px 6px 0 0;background:linear-gradient(to bottom,#eff5ff 0,#e0ecff 100%)"></div>
<div style="position:absolute;left:384px;top:83px;width:114px;height:46px;border:1px solid #95b8e7;border-bottom:0;border-radius:6px 6px 0 0;background:linear-gradient(to bottom,#eff5ff 0,#e0ecff 100%)"></div>
<div style="position:absolute;left:506px;top:83px;width:150px;height:47px;border:1px solid #95b8e7;border-bottom:0;border-radius:6px 6px 0 0;background:linear-gradient(to bottom,#eff5ff 0,#ffffff 100%)"></div>
<div style="position:absolute;left:277px;top:129px;width:229px;height:1px;background:#95b8e7"></div>
<div style="position:absolute;left:658px;top:129px;width:656px;height:1px;background:#95b8e7"></div>
<div style="position:absolute;left:276px;top:130px;width:1038px;height:3px;background:#95b8e7"></div>
<svg style="position:absolute;left:297px;top:95px" width="26" height="24" viewBox="0 0 26 24"><path d="M5.5,12 L12.8,5.5 L20.5,12 L20.5,22.5 L5.5,22.5Z" fill="#f1f1f1"/>
<path d="M5.5,12 L7,11 L7,22.5 L5.5,22.5Z M19,11 L20.5,12 L20.5,22.5 L19,22.5Z" fill="#999"/>
<rect x="10" y="13.4" width="5.8" height="8.8" fill="#8e8e8e"/><rect x="12.2" y="14.5" width="1.6" height="7.5" fill="#b0b0b0"/>
<path d="M1.2,11.3 L12.8,1 L24.8,11.3 L21.5,14.3 L12.8,6.8 L4.3,14.3Z" fill="#d3a15a" stroke="#bd7d35" stroke-width=".9" stroke-linejoin="round"/>
<path d="M4,11.2 L12.8,3.6 L22,11.2" fill="none" stroke="#e2b878" stroke-width="1.2"/>
<path d="M1,22.7 L1,20.5 C2.5,17.8 6.5,17.5 8.5,19.5 L9.5,22.7Z" fill="#5cad52"/>
<path d="M16.5,22.7 L17.2,19.5 C19.5,17.5 23.5,17.8 25,20.5 L25,22.7Z" fill="#4e9e46"/>
<rect x="1" y="21.6" width="24" height="1.3" fill="#777" opacity=".6"/></svg>
<div class="t" style="left:326px;top:99px;font-size:17.8px;line-height:17.8px;color:#0e2d5f">首页</div>
<div class="t" style="left:400px;top:99px;font-size:17.8px;line-height:17.8px;color:#0e2d5f">账套设置</div>
<div class="t" style="left:522px;top:99px;font-size:17.8px;line-height:17.8px;color:#0e2d5f;font-weight:bold">账套人员设置</div>
<svg style="position:absolute;left:478.5px;top:102px" width="10" height="10" viewBox="0 0 10 10"><path d="M1,1 L9,9 M9,1 L1,9" stroke="#8096c0" stroke-width="1.6"/></svg>
<svg style="position:absolute;left:636.5px;top:102px" width="10" height="10" viewBox="0 0 10 10"><path d="M1,1 L9,9 M9,1 L1,9" stroke="#8096c0" stroke-width="1.6"/></svg>
<div style="position:absolute;left:277px;top:133px;width:3px;height:793px;background:#95b8e7"></div>
<div style="position:absolute;left:280px;top:133px;width:1034px;height:62px;background:#f4f4f4"></div>
<svg style="position:absolute;left:296.5px;top:149.5px" width="21" height="21" viewBox="0 0 21 21"><circle cx="10.5" cy="10.5" r="10" fill="#6cba5c"/><circle cx="10.5" cy="10.5" r="10" fill="none" stroke="#4e9a44" stroke-width="1"/>
<circle cx="10.5" cy="10.5" r="7.5" fill="#8fd07c" stroke="#c9ebbd" stroke-width=".8"/>
<path d="M10.5,5.5 L10.5,15.5 M5.5,10.5 L15.5,10.5" stroke="#fff" stroke-width="3"/></svg>
<div class="t" style="left:325px;top:153px;font-size:17.8px;line-height:17.8px;color:#0000ff">增加</div>
<svg style="position:absolute;left:381.5px;top:152px" width="24" height="15.5" viewBox="0 0 24 15.5"><rect x=".7" y=".7" width="22.6" height="14" rx="3" fill="#fff" stroke="#3b8a3b" stroke-width="1.4"/>
<rect x="3.5" y="3.5" width="17" height="8.5" rx="1" fill="#1c8f1c"/>
<rect x="4.5" y="4.5" width="15" height="2.5" fill="#39ad39"/></svg>
<div class="t" style="left:412px;top:153px;font-size:17.8px;line-height:17.8px;color:#0000ff">删除</div>
<svg style="position:absolute;left:469.5px;top:148.5px" width="25" height="25" viewBox="0 0 25 25"><rect x=".8" y=".8" width="21.6" height="19" rx="1.2" fill="#f8fbff" stroke="#6f9bd6" stroke-width="1.5"/>
<rect x="1.3" y="1.3" width="20.6" height="3.8" fill="#86b2e6"/>
<path d="M6.5,23.8 L8,18.8 L19.5,8.2 C20.8,7.2 22.8,7.4 23.8,8.6 C24.6,9.8 24.4,11.4 23.3,12.5 L12,23 Z" fill="#f4d64a" stroke="#b8802a" stroke-width=".8"/>
<path d="M19.5,8.2 C20.8,7.2 22.8,7.4 23.8,8.6 C24.6,9.8 24.4,11.4 23.3,12.5 L20.5,10Z" fill="#f2c8a0"/>
<path d="M6.5,23.8 L8,18.8 L12,23Z" fill="#e8b890"/><path d="M6.5,23.8 L7.1,21.8 L8.8,23.2Z" fill="#5a3a10"/></svg>
<div class="t" style="left:501px;top:153px;font-size:17.8px;line-height:17.8px;color:#0000ff">设计</div>
<svg style="position:absolute;left:548px;top:156.5px" width="13" height="7" viewBox="0 0 13 7"><path d="M0,0 L13,0 L6.5,7Z" fill="#000"/></svg>
<svg style="position:absolute;left:580.5px;top:148px" width="23" height="23.5" viewBox="0 0 23 23.5"><path d="M2.6,.6 L17.5,.6 L22.8,5.8 L22.8,23 L2.6,23Z" fill="#d4e6fb" stroke="#5d8fd4" stroke-width="1.3"/>
<path d="M17.5,.6 L17.5,5.8 L22.8,5.8" fill="#eaf3fd" stroke="#5d8fd4" stroke-width="1"/>
<path d="M0.5,6 L17,6 L17,9 L12.5,12 L16,15.5 L16,18.5 L10,18.5 L8.5,14.5 L5,18 L0.5,18 L0.5,15 L5.5,12 L0.5,9Z" fill="#3e8c34"/>
<path d="M2.5,8 L13.5,17" stroke="#a8dc8c" stroke-width="1.6"/></svg>
<div class="t" style="left:611px;top:153px;font-size:17.8px;line-height:17.8px;color:#0000ff">导出</div>
<svg style="position:absolute;left:659px;top:156.5px" width="13" height="7" viewBox="0 0 13 7"><path d="M0,0 L13,0 L6.5,7Z" fill="#000"/></svg>
<svg style="position:absolute;left:691px;top:146.5px" width="25" height="25" viewBox="0 0 25 25"><rect x="7.2" y="1.6" width="11.4" height="13" fill="#f4f8fd" stroke="#8a8a8a" stroke-width="1.1"/>
<path d="M1.3,12 C1.3,9.8 2.5,8.8 4.5,8.8 L21.5,8.8 C23.5,8.8 24.7,9.8 24.7,12 L24.7,18.5 C24.7,20.5 23.5,21.5 21.5,21.5 L4.5,21.5 C2.5,21.5 1.3,20.5 1.3,18.5Z" fill="#ececf0" stroke="#777" stroke-width="1.2"/>
<rect x="7" y="12.8" width="12" height="3.6" rx="1" fill="#1a8cf6"/>
<path d="M4.5,17.3 L21.5,17.3" stroke="#666" stroke-width="1.1"/>
<path d="M5,19 L21.6,19 L20.8,24.5 L5.8,24.5Z" fill="#f6f6f8" stroke="#7a7a7a" stroke-width="1.1"/></svg>
<div class="t" style="left:722.5px;top:153px;font-size:17.8px;line-height:17.8px;color:#0000ff">打印选中</div>
<svg style="position:absolute;left:805.5px;top:156.5px" width="13" height="7" viewBox="0 0 13 7"><path d="M0,0 L13,0 L6.5,7Z" fill="#000"/></svg>
<svg style="position:absolute;left:841px;top:148.5px" width="23" height="23" viewBox="0 0 23 23"><circle cx="8.5" cy="8.5" r="7.2" fill="#d6ecfb" stroke="#8fb2cc" stroke-width="1.8"/>
<circle cx="6.5" cy="6.5" r="3" fill="#fff" opacity=".8"/>
<path d="M13.5,13.5 L21,21" stroke="#e49a2a" stroke-width="3.6" stroke-linecap="round"/></svg>
<div class="t" style="left:870px;top:153px;font-size:17.8px;line-height:17.8px;color:#0000ff">查询</div>
<svg style="position:absolute;left:917px;top:156.5px" width="13" height="7" viewBox="0 0 13 7"><path d="M0,0 L13,0 L6.5,7Z" fill="#000"/></svg>
<svg style="position:absolute;left:951px;top:147px" width="24" height="25" viewBox="0 0 24 25"><rect x=".5" y="4" width="13.5" height="19" fill="#9c9c9c" stroke="#6e6e6e" stroke-width=".8"/>
<rect x="0" y="21.6" width="14" height="1.6" fill="#555"/>
<path d="M13.4,3.2 L23.7,.7 L23.7,25 L13.4,22.5Z" fill="#b9772c"/><path d="M14.8,4.3 L22.3,2.4 L22.3,23.2 L14.8,21.4Z" fill="#e2ab62"/>
<circle cx="16.8" cy="13" r=".9" fill="#fff3a0"/>
<path d="M.6,13.5 L6.5,7.5 L6.5,10.8 L13,10.8 L13,16.2 L6.5,16.2 L6.5,19.5Z" fill="#5cb04c"/></svg>
<div class="t" style="left:980.5px;top:153px;font-size:17.8px;line-height:17.8px;color:#0000ff">退出</div>
<style>.d{font-size:17.8px;line-height:17.8px;color:#000}.n{letter-spacing:1.4px;-webkit-text-stroke:0.3px #000;position:relative;top:1px}</style>
<div style="position:absolute;left:280px;top:195px;width:1034px;height:1px;background:#d9d9d9"></div>
<div style="position:absolute;left:280px;top:196px;width:1034px;height:36px;background:linear-gradient(to bottom,#f9f9f9 0,#efefef 100%)"></div>
<div style="position:absolute;left:280px;top:232px;width:1034px;height:1px;background:#cfcfcf"></div>
<div style="position:absolute;left:324px;top:196px;width:0px;height:36px;border-left:1px dotted #ccc"></div>
<div style="position:absolute;left:366px;top:196px;width:0px;height:36px;border-left:1px dotted #ccc"></div>
<div style="position:absolute;left:485px;top:196px;width:0px;height:36px;border-left:1px dotted #ccc"></div>
<div style="position:absolute;left:564px;top:196px;width:0px;height:36px;border-left:1px dotted #ccc"></div>
<div style="position:absolute;left:643px;top:196px;width:0px;height:36px;border-left:1px dotted #ccc"></div>
<div style="position:absolute;left:842px;top:196px;width:0px;height:36px;border-left:1px dotted #ccc"></div>
<div style="position:absolute;left:986px;top:196px;width:0px;height:36px;border-left:1px dotted #ccc"></div>
<div style="position:absolute;left:1084px;top:196px;width:0px;height:36px;border-left:1px dotted #ccc"></div>
<div style="position:absolute;left:1204px;top:196px;width:0px;height:36px;border-left:1px dotted #ccc"></div>
<div style="position:absolute;left:334px;top:202px;width:18px;height:18px;border:2px solid #7a7a7a;border-radius:4px;background:#fff"></div>
<div class="t" style="left:325.5px;width:200px;text-align:center;top:205.5px;font-size:17.8px;line-height:17.8px;color:#000">操作</div>
<div class="t" style="left:418px;width:200px;text-align:center;top:205.5px;font-size:17.8px;line-height:17.8px;color:#000"></div>
<div class="t" style="left:503.5px;width:200px;text-align:center;top:205.5px;font-size:17.8px;line-height:17.8px;color:#000">编码</div>
<div class="t" style="left:642.5px;width:200px;text-align:center;top:205.5px;font-size:17.8px;line-height:17.8px;color:#000">名称</div>
<div class="t" style="left:814px;width:200px;text-align:center;top:205.5px;font-size:17.8px;line-height:17.8px;color:#000">备注</div>
<div class="t" style="left:935px;width:200px;text-align:center;top:205.5px;font-size:17.8px;line-height:17.8px;color:#000">按年计算</div>
<div class="t" style="left:1044px;width:200px;text-align:center;top:205.5px;font-size:17.8px;line-height:17.8px;color:#000">人数</div>
<div style="position:absolute;left:280px;top:233px;width:44px;height:37px;background:linear-gradient(to bottom,#f9f9f9 0,#efefef 100%)"></div>
<div style="position:absolute;left:280px;top:270px;width:44px;height:0px;border-top:1px dotted #ccc"></div>
<div class="t" style="left:280px;width:44px;text-align:center;top:244.0px;font-size:17.8px;line-height:17.8px;letter-spacing:0.5px;-webkit-text-stroke:0.3px #000">1</div>
<div style="position:absolute;left:280px;top:271px;width:44px;height:36px;background:linear-gradient(to bottom,#f9f9f9 0,#efefef 100%)"></div>
<div style="position:absolute;left:280px;top:307px;width:44px;height:0px;border-top:1px dotted #ccc"></div>
<div class="t" style="left:280px;width:44px;text-align:center;top:281.5px;font-size:17.8px;line-height:17.8px;letter-spacing:0.5px;-webkit-text-stroke:0.3px #000">2</div>
<div style="position:absolute;left:280px;top:308px;width:44px;height:37px;background:linear-gradient(to bottom,#f9f9f9 0,#efefef 100%)"></div>
<div style="position:absolute;left:280px;top:345px;width:44px;height:0px;border-top:1px dotted #ccc"></div>
<div class="t" style="left:280px;width:44px;text-align:center;top:319.0px;font-size:17.8px;line-height:17.8px;letter-spacing:0.5px;-webkit-text-stroke:0.3px #000">3</div>
<div style="position:absolute;left:280px;top:346px;width:44px;height:36px;background:linear-gradient(to bottom,#f9f9f9 0,#efefef 100%)"></div>
<div style="position:absolute;left:280px;top:382px;width:44px;height:0px;border-top:1px dotted #ccc"></div>
<div class="t" style="left:280px;width:44px;text-align:center;top:356.5px;font-size:17.8px;line-height:17.8px;letter-spacing:0.5px;-webkit-text-stroke:0.3px #000">4</div>
<div style="position:absolute;left:280px;top:383px;width:44px;height:37px;background:linear-gradient(to bottom,#f9f9f9 0,#efefef 100%)"></div>
<div style="position:absolute;left:280px;top:420px;width:44px;height:0px;border-top:1px dotted #ccc"></div>
<div class="t" style="left:280px;width:44px;text-align:center;top:394.0px;font-size:17.8px;line-height:17.8px;letter-spacing:0.5px;-webkit-text-stroke:0.3px #000">5</div>
<div style="position:absolute;left:280px;top:421px;width:44px;height:37px;background:linear-gradient(to bottom,#f9f9f9 0,#efefef 100%)"></div>
<div style="position:absolute;left:280px;top:458px;width:44px;height:0px;border-top:1px dotted #ccc"></div>
<div class="t" style="left:280px;width:44px;text-align:center;top:432.0px;font-size:17.8px;line-height:17.8px;letter-spacing:0.5px;-webkit-text-stroke:0.3px #000">6</div>
<div style="position:absolute;left:324px;top:270px;width:881px;height:0px;border-top:1px dotted #ccc"></div>
<div style="position:absolute;left:324px;top:233px;width:0px;height:37px;border-left:1px dotted #ccc"></div>
<div style="position:absolute;left:366px;top:233px;width:0px;height:37px;border-left:1px dotted #ccc"></div>
<div style="position:absolute;left:485px;top:233px;width:0px;height:37px;border-left:1px dotted #ccc"></div>
<div style="position:absolute;left:564px;top:233px;width:0px;height:37px;border-left:1px dotted #ccc"></div>
<div style="position:absolute;left:643px;top:233px;width:0px;height:37px;border-left:1px dotted #ccc"></div>
<div style="position:absolute;left:842px;top:233px;width:0px;height:37px;border-left:1px dotted #ccc"></div>
<div style="position:absolute;left:986px;top:233px;width:0px;height:37px;border-left:1px dotted #ccc"></div>
<div style="position:absolute;left:1084px;top:233px;width:0px;height:37px;border-left:1px dotted #ccc"></div>
<div style="position:absolute;left:1204px;top:233px;width:0px;height:37px;border-left:1px dotted #ccc"></div>
<div style="position:absolute;left:334px;top:240px;width:18px;height:18px;border:2px solid #7a7a7a;border-radius:4px;background:#fff"></div>
<svg style="position:absolute;left:392px;top:233px" width="30" height="30" viewBox="0 0 30 30"><rect x="0" y="0" width="30" height="30" fill="#f2f2f2"/>
<rect x="3.6" y="6.3" width="20" height="20" rx="1.2" fill="#fff" stroke="#6a8ca8" stroke-width="1.5"/>
<path d="M8.5,22.8 L23.5,22.8" stroke="#6a8ca8" stroke-width="1.2"/>
<path d="M8,22.5 L9.8,16.3 L21.5,4.6 C23,3.1 25.5,3.1 26.6,4.4 C27.8,5.6 27.6,7.8 26.2,9.2 L14.4,20.8Z" fill="#7ad0f3" stroke="#4e7fa3" stroke-width="1.3"/>
<path d="M9.8,16.3 L14.4,20.8" stroke="#4e7fa3" stroke-width="1.1"/>
<path d="M20.8,5.4 L25.5,10" stroke="#4e7fa3" stroke-width="1.1"/>
<path d="M11.8,16.6 L21.5,7" stroke="#4e7fa3" stroke-width=".9"/>
<path d="M8,22.5 L9.2,18.4 L12.2,21.3Z" fill="#fff"/></svg>
<div style="position:absolute;left:425px;top:249px;width:2px;height:16px;background:#0b1240"></div>
<svg style="position:absolute;left:431px;top:233px" width="30" height="30" viewBox="0 0 30 30"><rect x="0" y="0" width="30" height="30" fill="#f2f2f2"/>
<path d="M11.5,4 L11.5,1.3 L20,1.3 L20,4" fill="none" stroke="#c4414e" stroke-width="1.6"/>
<rect x="3" y="5.3" width="21.6" height="5.2" rx="1" fill="#f4b4b4" stroke="#c4414e" stroke-width="1.5"/>
<path d="M4.6,10.6 L6,26.8 C6.2,27.6 6.8,28 7.5,28 L15.5,28" fill="none" stroke="#c4414e" stroke-width="1.6"/>
<path d="M22.6,10.6 L22.2,17" fill="none" stroke="#c4414e" stroke-width="1.6"/>
<path d="M9.3,13 L10,25 M13.5,13 L13.7,25" stroke="#c4414e" stroke-width="1.4"/>
<path d="M17.5,13.5 L17.5,17 M20.5,13.5 L20.5,17" stroke="#c4414e" stroke-width="1.3"/>
<circle cx="22" cy="23.5" r="6" fill="#f2f2f2" stroke="#c4414e" stroke-width="1.6"/>
<path d="M19.6,21.1 L24.4,25.9 M24.4,21.1 L19.6,25.9" stroke="#c4414e" stroke-width="1.4"/></svg>
<div class="t d" style="left:497px;width:60px;text-align:right;top:242.5px"><span class="n">7</span></div>
<div class="t d" style="left:571px;width:72px;overflow:hidden;top:242.5px"><span class="n">RS2024</span></div>
<div class="t d" style="left:650px;width:190px;overflow:hidden;top:242.5px">纯<span class="n">Excel</span>导入工资模式</div>
<div class="t d" style="left:849px;width:137px;overflow:hidden;top:242.5px"></div>
<div class="t d" style="left:994px;width:80px;overflow:hidden;top:242.5px"><span class="n">0</span></div>
<div class="t d" style="left:1104.0px;width:80px;text-align:center;top:242.5px"><span class="n">0</span></div>
<div style="position:absolute;left:324px;top:308px;width:881px;height:0px;border-top:1px dotted #ccc"></div>
<div style="position:absolute;left:324px;top:271px;width:0px;height:37px;border-left:1px dotted #ccc"></div>
<div style="position:absolute;left:366px;top:271px;width:0px;height:37px;border-left:1px dotted #ccc"></div>
<div style="position:absolute;left:485px;top:271px;width:0px;height:37px;border-left:1px dotted #ccc"></div>
<div style="position:absolute;left:564px;top:271px;width:0px;height:37px;border-left:1px dotted #ccc"></div>
<div style="position:absolute;left:643px;top:271px;width:0px;height:37px;border-left:1px dotted #ccc"></div>
<div style="position:absolute;left:842px;top:271px;width:0px;height:37px;border-left:1px dotted #ccc"></div>
<div style="position:absolute;left:986px;top:271px;width:0px;height:37px;border-left:1px dotted #ccc"></div>
<div style="position:absolute;left:1084px;top:271px;width:0px;height:37px;border-left:1px dotted #ccc"></div>
<div style="position:absolute;left:1204px;top:271px;width:0px;height:37px;border-left:1px dotted #ccc"></div>
<div style="position:absolute;left:334px;top:278px;width:18px;height:18px;border:2px solid #7a7a7a;border-radius:4px;background:#fff"></div>
<svg style="position:absolute;left:392px;top:271px" width="30" height="30" viewBox="0 0 30 30"><rect x="0" y="0" width="30" height="30" fill="#f2f2f2"/>
<rect x="3.6" y="6.3" width="20" height="20" rx="1.2" fill="#fff" stroke="#6a8ca8" stroke-width="1.5"/>
<path d="M8.5,22.8 L23.5,22.8" stroke="#6a8ca8" stroke-width="1.2"/>
<path d="M8,22.5 L9.8,16.3 L21.5,4.6 C23,3.1 25.5,3.1 26.6,4.4 C27.8,5.6 27.6,7.8 26.2,9.2 L14.4,20.8Z" fill="#7ad0f3" stroke="#4e7fa3" stroke-width="1.3"/>
<path d="M9.8,16.3 L14.4,20.8" stroke="#4e7fa3" stroke-width="1.1"/>
<path d="M20.8,5.4 L25.5,10" stroke="#4e7fa3" stroke-width="1.1"/>
<path d="M11.8,16.6 L21.5,7" stroke="#4e7fa3" stroke-width=".9"/>
<path d="M8,22.5 L9.2,18.4 L12.2,21.3Z" fill="#fff"/></svg>
<div style="position:absolute;left:425px;top:287px;width:2px;height:16px;background:#0b1240"></div>
<svg style="position:absolute;left:431px;top:271px" width="30" height="30" viewBox="0 0 30 30"><rect x="0" y="0" width="30" height="30" fill="#f2f2f2"/>
<path d="M11.5,4 L11.5,1.3 L20,1.3 L20,4" fill="none" stroke="#c4414e" stroke-width="1.6"/>
<rect x="3" y="5.3" width="21.6" height="5.2" rx="1" fill="#f4b4b4" stroke="#c4414e" stroke-width="1.5"/>
<path d="M4.6,10.6 L6,26.8 C6.2,27.6 6.8,28 7.5,28 L15.5,28" fill="none" stroke="#c4414e" stroke-width="1.6"/>
<path d="M22.6,10.6 L22.2,17" fill="none" stroke="#c4414e" stroke-width="1.6"/>
<path d="M9.3,13 L10,25 M13.5,13 L13.7,25" stroke="#c4414e" stroke-width="1.4"/>
<path d="M17.5,13.5 L17.5,17 M20.5,13.5 L20.5,17" stroke="#c4414e" stroke-width="1.3"/>
<circle cx="22" cy="23.5" r="6" fill="#f2f2f2" stroke="#c4414e" stroke-width="1.6"/>
<path d="M19.6,21.1 L24.4,25.9 M24.4,21.1 L19.6,25.9" stroke="#c4414e" stroke-width="1.4"/></svg>
<div class="t d" style="left:497px;width:60px;text-align:right;top:280.5px"><span class="n">6</span></div>
<div class="t d" style="left:571px;width:72px;overflow:hidden;top:280.5px"><span class="n">RS2021</span></div>
<div class="t d" style="left:650px;width:190px;overflow:hidden;top:280.5px">销售类型工资</div>
<div class="t d" style="left:849px;width:137px;overflow:hidden;top:280.5px">以销售提成类型为</div>
<div class="t d" style="left:994px;width:80px;overflow:hidden;top:280.5px"><span class="n">0</span></div>
<div class="t d" style="left:1104.0px;width:80px;text-align:center;top:280.5px"><span class="n">10</span></div>
<div style="position:absolute;left:324px;top:346px;width:881px;height:0px;border-top:1px dotted #ccc"></div>
<div style="position:absolute;left:324px;top:309px;width:0px;height:37px;border-left:1px dotted #ccc"></div>
<div style="position:absolute;left:366px;top:309px;width:0px;height:37px;border-left:1px dotted #ccc"></div>
<div style="position:absolute;left:485px;top:309px;width:0px;height:37px;border-left:1px dotted #ccc"></div>
<div style="position:absolute;left:564px;top:309px;width:0px;height:37px;border-left:1px dotted #ccc"></div>
<div style="position:absolute;left:643px;top:309px;width:0px;height:37px;border-left:1px dotted #ccc"></div>
<div style="position:absolute;left:842px;top:309px;width:0px;height:37px;border-left:1px dotted #ccc"></div>
<div style="position:absolute;left:986px;top:309px;width:0px;height:37px;border-left:1px dotted #ccc"></div>
<div style="position:absolute;left:1084px;top:309px;width:0px;height:37px;border-left:1px dotted #ccc"></div>
<div style="position:absolute;left:1204px;top:309px;width:0px;height:37px;border-left:1px dotted #ccc"></div>
<div style="position:absolute;left:334px;top:316px;width:18px;height:18px;border:2px solid #7a7a7a;border-radius:4px;background:#fff"></div>
<svg style="position:absolute;left:392px;top:309px" width="30" height="30" viewBox="0 0 30 30"><rect x="0" y="0" width="30" height="30" fill="#f2f2f2"/>
<rect x="3.6" y="6.3" width="20" height="20" rx="1.2" fill="#fff" stroke="#6a8ca8" stroke-width="1.5"/>
<path d="M8.5,22.8 L23.5,22.8" stroke="#6a8ca8" stroke-width="1.2"/>
<path d="M8,22.5 L9.8,16.3 L21.5,4.6 C23,3.1 25.5,3.1 26.6,4.4 C27.8,5.6 27.6,7.8 26.2,9.2 L14.4,20.8Z" fill="#7ad0f3" stroke="#4e7fa3" stroke-width="1.3"/>
<path d="M9.8,16.3 L14.4,20.8" stroke="#4e7fa3" stroke-width="1.1"/>
<path d="M20.8,5.4 L25.5,10" stroke="#4e7fa3" stroke-width="1.1"/>
<path d="M11.8,16.6 L21.5,7" stroke="#4e7fa3" stroke-width=".9"/>
<path d="M8,22.5 L9.2,18.4 L12.2,21.3Z" fill="#fff"/></svg>
<div style="position:absolute;left:425px;top:325px;width:2px;height:16px;background:#0b1240"></div>
<svg style="position:absolute;left:431px;top:309px" width="30" height="30" viewBox="0 0 30 30"><rect x="0" y="0" width="30" height="30" fill="#f2f2f2"/>
<path d="M11.5,4 L11.5,1.3 L20,1.3 L20,4" fill="none" stroke="#c4414e" stroke-width="1.6"/>
<rect x="3" y="5.3" width="21.6" height="5.2" rx="1" fill="#f4b4b4" stroke="#c4414e" stroke-width="1.5"/>
<path d="M4.6,10.6 L6,26.8 C6.2,27.6 6.8,28 7.5,28 L15.5,28" fill="none" stroke="#c4414e" stroke-width="1.6"/>
<path d="M22.6,10.6 L22.2,17" fill="none" stroke="#c4414e" stroke-width="1.6"/>
<path d="M9.3,13 L10,25 M13.5,13 L13.7,25" stroke="#c4414e" stroke-width="1.4"/>
<path d="M17.5,13.5 L17.5,17 M20.5,13.5 L20.5,17" stroke="#c4414e" stroke-width="1.3"/>
<circle cx="22" cy="23.5" r="6" fill="#f2f2f2" stroke="#c4414e" stroke-width="1.6"/>
<path d="M19.6,21.1 L24.4,25.9 M24.4,21.1 L19.6,25.9" stroke="#c4414e" stroke-width="1.4"/></svg>
<div class="t d" style="left:497px;width:60px;text-align:right;top:318.5px"><span class="n">5</span></div>
<div class="t d" style="left:571px;width:72px;overflow:hidden;top:318.5px"><span class="n">002</span></div>
<div class="t d" style="left:650px;width:190px;overflow:hidden;top:318.5px">按年工资帐套</div>
<div class="t d" style="left:849px;width:137px;overflow:hidden;top:318.5px">按年扣除个人所得税</div>
<div class="t d" style="left:994px;width:80px;overflow:hidden;top:318.5px"><span class="n">1</span></div>
<div class="t d" style="left:1104.0px;width:80px;text-align:center;top:318.5px"><span class="n">5</span></div>
<div style="position:absolute;left:325px;top:347px;width:879px;height:37px;background:#ffe48d"></div>
<div style="position:absolute;left:324px;top:384px;width:881px;height:0px;border-top:1px dotted #ccc"></div>
<div style="position:absolute;left:324px;top:347px;width:0px;height:37px;border-left:1px dotted #ccc"></div>
<div style="position:absolute;left:366px;top:347px;width:0px;height:37px;border-left:1px dotted #ccc"></div>
<div style="position:absolute;left:485px;top:347px;width:0px;height:37px;border-left:1px dotted #ccc"></div>
<div style="position:absolute;left:564px;top:347px;width:0px;height:37px;border-left:1px dotted #ccc"></div>
<div style="position:absolute;left:643px;top:347px;width:0px;height:37px;border-left:1px dotted #ccc"></div>
<div style="position:absolute;left:842px;top:347px;width:0px;height:37px;border-left:1px dotted #ccc"></div>
<div style="position:absolute;left:986px;top:347px;width:0px;height:37px;border-left:1px dotted #ccc"></div>
<div style="position:absolute;left:1084px;top:347px;width:0px;height:37px;border-left:1px dotted #ccc"></div>
<div style="position:absolute;left:1204px;top:347px;width:0px;height:37px;border-left:1px dotted #ccc"></div>
<div style="position:absolute;left:334px;top:354px;width:18px;height:18px;border:2px solid #7a7a7a;border-radius:4px;background:#fff"></div>
<svg style="position:absolute;left:392px;top:347px" width="30" height="30" viewBox="0 0 30 30"><rect x="0" y="0" width="30" height="30" fill="#f2f2f2"/>
<rect x="3.6" y="6.3" width="20" height="20" rx="1.2" fill="#fff" stroke="#6a8ca8" stroke-width="1.5"/>
<path d="M8.5,22.8 L23.5,22.8" stroke="#6a8ca8" stroke-width="1.2"/>
<path d="M8,22.5 L9.8,16.3 L21.5,4.6 C23,3.1 25.5,3.1 26.6,4.4 C27.8,5.6 27.6,7.8 26.2,9.2 L14.4,20.8Z" fill="#7ad0f3" stroke="#4e7fa3" stroke-width="1.3"/>
<path d="M9.8,16.3 L14.4,20.8" stroke="#4e7fa3" stroke-width="1.1"/>
<path d="M20.8,5.4 L25.5,10" stroke="#4e7fa3" stroke-width="1.1"/>
<path d="M11.8,16.6 L21.5,7" stroke="#4e7fa3" stroke-width=".9"/>
<path d="M8,22.5 L9.2,18.4 L12.2,21.3Z" fill="#fff"/></svg>
<div style="position:absolute;left:425px;top:363px;width:2px;height:16px;background:#0b1240"></div>
<svg style="position:absolute;left:431px;top:347px" width="30" height="30" viewBox="0 0 30 30"><rect x="0" y="0" width="30" height="30" fill="#f2f2f2"/>
<path d="M11.5,4 L11.5,1.3 L20,1.3 L20,4" fill="none" stroke="#c4414e" stroke-width="1.6"/>
<rect x="3" y="5.3" width="21.6" height="5.2" rx="1" fill="#f4b4b4" stroke="#c4414e" stroke-width="1.5"/>
<path d="M4.6,10.6 L6,26.8 C6.2,27.6 6.8,28 7.5,28 L15.5,28" fill="none" stroke="#c4414e" stroke-width="1.6"/>
<path d="M22.6,10.6 L22.2,17" fill="none" stroke="#c4414e" stroke-width="1.6"/>
<path d="M9.3,13 L10,25 M13.5,13 L13.7,25" stroke="#c4414e" stroke-width="1.4"/>
<path d="M17.5,13.5 L17.5,17 M20.5,13.5 L20.5,17" stroke="#c4414e" stroke-width="1.3"/>
<circle cx="22" cy="23.5" r="6" fill="#f2f2f2" stroke="#c4414e" stroke-width="1.6"/>
<path d="M19.6,21.1 L24.4,25.9 M24.4,21.1 L19.6,25.9" stroke="#c4414e" stroke-width="1.4"/></svg>
<div class="t d" style="left:497px;width:60px;text-align:right;top:356.5px"><span class="n">4</span></div>
<div class="t d" style="left:571px;width:72px;overflow:hidden;top:356.5px"><span class="n">004</span></div>
<div class="t d" style="left:650px;width:190px;overflow:hidden;top:356.5px">酒店餐饮类职工账套</div>
<div class="t d" style="left:849px;width:137px;overflow:hidden;top:356.5px">酒店餐饮类</div>
<div class="t d" style="left:994px;width:80px;overflow:hidden;top:356.5px"><span class="n">0</span></div>
<div class="t d" style="left:1104.0px;width:80px;text-align:center;top:356.5px"><span class="n">6</span></div>
<div style="position:absolute;left:324px;top:422px;width:881px;height:0px;border-top:1px dotted #ccc"></div>
<div style="position:absolute;left:324px;top:385px;width:0px;height:37px;border-left:1px dotted #ccc"></div>
<div style="position:absolute;left:366px;top:385px;width:0px;height:37px;border-left:1px dotted #ccc"></div>
<div style="position:absolute;left:485px;top:385px;width:0px;height:37px;border-left:1px dotted #ccc"></div>
<div style="position:absolute;left:564px;top:385px;width:0px;height:37px;border-left:1px dotted #ccc"></div>
<div style="position:absolute;left:643px;top:385px;width:0px;height:37px;border-left:1px dotted #ccc"></div>
<div style="position:absolute;left:842px;top:385px;width:0px;height:37px;border-left:1px dotted #ccc"></div>
<div style="position:absolute;left:986px;top:385px;width:0px;height:37px;border-left:1px dotted #ccc"></div>
<div style="position:absolute;left:1084px;top:385px;width:0px;height:37px;border-left:1px dotted #ccc"></div>
<div style="position:absolute;left:1204px;top:385px;width:0px;height:37px;border-left:1px dotted #ccc"></div>
<div style="position:absolute;left:334px;top:392px;width:18px;height:18px;border:2px solid #7a7a7a;border-radius:4px;background:#fff"></div>
<svg style="position:absolute;left:392px;top:385px" width="30" height="30" viewBox="0 0 30 30"><rect x="0" y="0" width="30" height="30" fill="#f2f2f2"/>
<rect x="3.6" y="6.3" width="20" height="20" rx="1.2" fill="#fff" stroke="#6a8ca8" stroke-width="1.5"/>
<path d="M8.5,22.8 L23.5,22.8" stroke="#6a8ca8" stroke-width="1.2"/>
<path d="M8,22.5 L9.8,16.3 L21.5,4.6 C23,3.1 25.5,3.1 26.6,4.4 C27.8,5.6 27.6,7.8 26.2,9.2 L14.4,20.8Z" fill="#7ad0f3" stroke="#4e7fa3" stroke-width="1.3"/>
<path d="M9.8,16.3 L14.4,20.8" stroke="#4e7fa3" stroke-width="1.1"/>
<path d="M20.8,5.4 L25.5,10" stroke="#4e7fa3" stroke-width="1.1"/>
<path d="M11.8,16.6 L21.5,7" stroke="#4e7fa3" stroke-width=".9"/>
<path d="M8,22.5 L9.2,18.4 L12.2,21.3Z" fill="#fff"/></svg>
<div style="position:absolute;left:425px;top:401px;width:2px;height:16px;background:#0b1240"></div>
<svg style="position:absolute;left:431px;top:385px" width="30" height="30" viewBox="0 0 30 30"><rect x="0" y="0" width="30" height="30" fill="#f2f2f2"/>
<path d="M11.5,4 L11.5,1.3 L20,1.3 L20,4" fill="none" stroke="#c4414e" stroke-width="1.6"/>
<rect x="3" y="5.3" width="21.6" height="5.2" rx="1" fill="#f4b4b4" stroke="#c4414e" stroke-width="1.5"/>
<path d="M4.6,10.6 L6,26.8 C6.2,27.6 6.8,28 7.5,28 L15.5,28" fill="none" stroke="#c4414e" stroke-width="1.6"/>
<path d="M22.6,10.6 L22.2,17" fill="none" stroke="#c4414e" stroke-width="1.6"/>
<path d="M9.3,13 L10,25 M13.5,13 L13.7,25" stroke="#c4414e" stroke-width="1.4"/>
<path d="M17.5,13.5 L17.5,17 M20.5,13.5 L20.5,17" stroke="#c4414e" stroke-width="1.3"/>
<circle cx="22" cy="23.5" r="6" fill="#f2f2f2" stroke="#c4414e" stroke-width="1.6"/>
<path d="M19.6,21.1 L24.4,25.9 M24.4,21.1 L19.6,25.9" stroke="#c4414e" stroke-width="1.4"/></svg>
<div class="t d" style="left:497px;width:60px;text-align:right;top:394.5px"><span class="n">3</span></div>
<div class="t d" style="left:571px;width:72px;overflow:hidden;top:394.5px"><span class="n">003</span></div>
<div class="t d" style="left:650px;width:190px;overflow:hidden;top:394.5px">临时职工帐套</div>
<div class="t d" style="left:849px;width:137px;overflow:hidden;top:394.5px">共7人</div>
<div class="t d" style="left:994px;width:80px;overflow:hidden;top:394.5px"><span class="n">0</span></div>
<div class="t d" style="left:1104.0px;width:80px;text-align:center;top:394.5px"><span class="n">5</span></div>
<div style="position:absolute;left:324px;top:460px;width:881px;height:0px;border-top:1px dotted #ccc"></div>
<div style="position:absolute;left:324px;top:423px;width:0px;height:37px;border-left:1px dotted #ccc"></div>
<div style="position:absolute;left:366px;top:423px;width:0px;height:37px;border-left:1px dotted #ccc"></div>
<div style="position:absolute;left:485px;top:423px;width:0px;height:37px;border-left:1px dotted #ccc"></div>
<div style="position:absolute;left:564px;top:423px;width:0px;height:37px;border-left:1px dotted #ccc"></div>
<div style="position:absolute;left:643px;top:423px;width:0px;height:37px;border-left:1px dotted #ccc"></div>
<div style="position:absolute;left:842px;top:423px;width:0px;height:37px;border-left:1px dotted #ccc"></div>
<div style="position:absolute;left:986px;top:423px;width:0px;height:37px;border-left:1px dotted #ccc"></div>
<div style="position:absolute;left:1084px;top:423px;width:0px;height:37px;border-left:1px dotted #ccc"></div>
<div style="position:absolute;left:1204px;top:423px;width:0px;height:37px;border-left:1px dotted #ccc"></div>
<div style="position:absolute;left:334px;top:430px;width:18px;height:18px;border:2px solid #7a7a7a;border-radius:4px;background:#fff"></div>
<svg style="position:absolute;left:392px;top:423px" width="30" height="30" viewBox="0 0 30 30"><rect x="0" y="0" width="30" height="30" fill="#f2f2f2"/>
<rect x="3.6" y="6.3" width="20" height="20" rx="1.2" fill="#fff" stroke="#6a8ca8" stroke-width="1.5"/>
<path d="M8.5,22.8 L23.5,22.8" stroke="#6a8ca8" stroke-width="1.2"/>
<path d="M8,22.5 L9.8,16.3 L21.5,4.6 C23,3.1 25.5,3.1 26.6,4.4 C27.8,5.6 27.6,7.8 26.2,9.2 L14.4,20.8Z" fill="#7ad0f3" stroke="#4e7fa3" stroke-width="1.3"/>
<path d="M9.8,16.3 L14.4,20.8" stroke="#4e7fa3" stroke-width="1.1"/>
<path d="M20.8,5.4 L25.5,10" stroke="#4e7fa3" stroke-width="1.1"/>
<path d="M11.8,16.6 L21.5,7" stroke="#4e7fa3" stroke-width=".9"/>
<path d="M8,22.5 L9.2,18.4 L12.2,21.3Z" fill="#fff"/></svg>
<div style="position:absolute;left:425px;top:439px;width:2px;height:16px;background:#0b1240"></div>
<svg style="position:absolute;left:431px;top:423px" width="30" height="30" viewBox="0 0 30 30"><rect x="0" y="0" width="30" height="30" fill="#f2f2f2"/>
<path d="M11.5,4 L11.5,1.3 L20,1.3 L20,4" fill="none" stroke="#c4414e" stroke-width="1.6"/>
<rect x="3" y="5.3" width="21.6" height="5.2" rx="1" fill="#f4b4b4" stroke="#c4414e" stroke-width="1.5"/>
<path d="M4.6,10.6 L6,26.8 C6.2,27.6 6.8,28 7.5,28 L15.5,28" fill="none" stroke="#c4414e" stroke-width="1.6"/>
<path d="M22.6,10.6 L22.2,17" fill="none" stroke="#c4414e" stroke-width="1.6"/>
<path d="M9.3,13 L10,25 M13.5,13 L13.7,25" stroke="#c4414e" stroke-width="1.4"/>
<path d="M17.5,13.5 L17.5,17 M20.5,13.5 L20.5,17" stroke="#c4414e" stroke-width="1.3"/>
<circle cx="22" cy="23.5" r="6" fill="#f2f2f2" stroke="#c4414e" stroke-width="1.6"/>
<path d="M19.6,21.1 L24.4,25.9 M24.4,21.1 L19.6,25.9" stroke="#c4414e" stroke-width="1.4"/></svg>
<div class="t d" style="left:497px;width:60px;text-align:right;top:432.5px"><span class="n">1</span></div>
<div class="t d" style="left:571px;width:72px;overflow:hidden;top:432.5px"><span class="n">001</span></div>
<div class="t d" style="left:650px;width:190px;overflow:hidden;top:432.5px">正式职工帐套</div>
<div class="t d" style="left:849px;width:137px;overflow:hidden;top:432.5px">正式职工固定工资</div>
<div class="t d" style="left:994px;width:80px;overflow:hidden;top:432.5px"><span class="n">0</span></div>
<div class="t d" style="left:1104.0px;width:80px;text-align:center;top:432.5px"><span class="n">10</span></div>
<div class="t" style="left:504.5px;top:205px;font-size:17.8px;line-height:17.8px;letter-spacing:2.2px;-webkit-text-stroke:0.4px #000">ID</div>
<svg style="position:absolute;left:532px;top:205px" width="12" height="16" viewBox="0 0 12 16"><path d="M6,0.3 L11.5,6.5 L0.5,6.5Z M0.5,9.3 L11.5,9.3 L6,15.5Z" fill="#c4c4c4"/></svg>
<div style="position:absolute;left:280px;top:878px;width:1034px;height:1px;background:#d4d4d4"></div>
<div style="position:absolute;left:280px;top:879px;width:1034px;height:45px;background:#f4f4f4"></div>
<div style="position:absolute;left:277px;top:926px;width:1037px;height:1px;background:#95b8e7"></div>
<div style="position:absolute;left:289px;top:887px;width:73px;height:27px;background:#cde8cd;border:1px solid #95b8e7"></div>
<div class="t" style="left:298.5px;top:893px;font-size:19.5px;line-height:19.5px;color:#000">20</div>
<svg style="position:absolute;left:343px;top:897px" width="14" height="9" viewBox="0 0 14 9"><path d="M1.2,1.2 L7,7.2 L12.8,1.2" fill="none" stroke="#000" stroke-width="2"/></svg>
<div style="position:absolute;left:375px;top:884px;width:1px;height:36px;background:#cfcfcf"></div>
<div style="position:absolute;left:458px;top:884px;width:1px;height:36px;background:#cfcfcf"></div>
<div style="position:absolute;left:592px;top:884px;width:1px;height:36px;background:#cfcfcf"></div>
<div style="position:absolute;left:675px;top:884px;width:1px;height:36px;background:#cfcfcf"></div>
<svg style="position:absolute;left:391.5px;top:894px" width="13" height="15.5" viewBox="0 0 13 15.5"><rect x="0" y="0" width="3.2" height="15.5" fill="#86c4ee"/><path d="M13,0 L4.5,7.75 L13,15.5Z" fill="#86c4ee"/></svg>
<svg style="position:absolute;left:432px;top:894px" width="10" height="15.5" viewBox="0 0 10 15.5"><path d="M10,0 L0,7.75 L10,15.5Z" fill="#86c4ee"/></svg>
<div class="t" style="left:469.5px;top:893px;font-size:17.8px;line-height:17.8px;color:#000">第</div>
<div style="position:absolute;left:491px;top:886px;width:38px;height:29px;background:#cde8cd;border:1px solid #95b8e7"></div>
<div class="t" style="left:495.5px;top:889px;font-size:20.5px;line-height:20.5px;color:#000">1</div>
<div class="t" style="left:534px;top:893px;font-size:17.8px;line-height:17.8px;color:#000">共<span class="n">1</span>页</div>
<svg style="position:absolute;left:610.5px;top:894px" width="10" height="15.5" viewBox="0 0 10 15.5"><path d="M0,0 L10,7.75 L0,15.5Z" fill="#86c4ee"/></svg>
<svg style="position:absolute;left:648px;top:894px" width="12" height="15.5" viewBox="0 0 12 15.5"><path d="M0,0 L8.5,7.75 L0,15.5Z" fill="#86c4ee"/><rect x="8.8" y="0" width="3.2" height="15.5" fill="#86c4ee"/></svg>
<svg style="position:absolute;left:689.5px;top:891px" width="17" height="19" viewBox="0 0 17 19"><path d="M12.5,5.2 A6.6,6.6 0 1 1 5,4.8" fill="none" stroke="#2b8fe0" stroke-width="2.6"/><path d="M5.5,0 L11.5,4.5 L5,8.5Z" fill="#2b8fe0"/></svg>
<div style="position:absolute;left:277px;top:927px;width:2px;height:26px;background:#95b8e7"></div>
<div style="position:absolute;left:279px;top:945px;width:1035px;height:1px;background:#95b8e7"></div>
<div style="position:absolute;left:277px;top:946px;width:1037px;height:7px;background:#e6eef8"></div>
<div style="position:absolute;left:277px;top:953px;width:1037px;height:2px;background:#95b8e7"></div>
<div style="position:absolute;left:277px;top:955px;width:3px;height:359px;background:#95b8e7"></div>
<div style="position:absolute;left:280px;top:956px;width:128px;height:42px;border:3px solid #3e9cf7;border-bottom:0;border-top-width:2.5px;background:#fff"></div>
<div class="t" style="left:291px;top:977.5px;font-size:17.8px;line-height:17.8px;font-weight:bold;color:#0000ff;-webkit-text-stroke:0.3px #0000ff">人员设置</div>
<div style="position:absolute;left:280px;top:998px;width:1034px;height:1px;background:#95b8e7"></div>
<div style="position:absolute;left:280px;top:999px;width:1034px;height:45px;background:#f4f4f4"></div>
<div style="position:absolute;left:367px;top:1004px;width:1px;height:36px;background:#d4d4d4"></div>
<div style="position:absolute;left:453px;top:1004px;width:1px;height:36px;background:#d4d4d4"></div>
<div style="position:absolute;left:575px;top:1004px;width:1px;height:36px;background:#d4d4d4"></div>
<svg style="position:absolute;left:292px;top:1014px" width="24" height="15.5" viewBox="0 0 24 15.5"><rect x=".7" y=".7" width="22.6" height="14" rx="3" fill="#fff" stroke="#3b8a3b" stroke-width="1.4"/>
<rect x="3.5" y="3.5" width="17" height="8.5" rx="1" fill="#1c8f1c"/>
<rect x="4.5" y="4.5" width="15" height="2.5" fill="#39ad39"/></svg>
<div class="t" style="left:321.5px;top:1015.5px;font-size:17.8px;line-height:17.8px;color:#0000ff">删除</div>
<svg style="position:absolute;left:377.5px;top:1010px" width="25" height="25" viewBox="0 0 25 25"><rect x=".8" y=".8" width="21.6" height="19" rx="1.2" fill="#f8fbff" stroke="#6f9bd6" stroke-width="1.5"/>
<rect x="1.3" y="1.3" width="20.6" height="3.8" fill="#86b2e6"/>
<path d="M6.5,23.8 L8,18.8 L19.5,8.2 C20.8,7.2 22.8,7.4 23.8,8.6 C24.6,9.8 24.4,11.4 23.3,12.5 L12,23 Z" fill="#f4d64a" stroke="#b8802a" stroke-width=".8"/>
<path d="M19.5,8.2 C20.8,7.2 22.8,7.4 23.8,8.6 C24.6,9.8 24.4,11.4 23.3,12.5 L20.5,10Z" fill="#f2c8a0"/>
<path d="M6.5,23.8 L8,18.8 L12,23Z" fill="#e8b890"/><path d="M6.5,23.8 L7.1,21.8 L8.8,23.2Z" fill="#5a3a10"/></svg>
<div class="t" style="left:408px;top:1015.5px;font-size:17.8px;line-height:17.8px;color:#0000ff">设计</div>
<svg style="position:absolute;left:463.5px;top:1010px" width="24" height="24" viewBox="0 0 24 24"><rect x=".6" y=".6" width="20" height="19" fill="#e4eefa" stroke="#8ea9c8" stroke-width="1"/>
<rect x="1" y="1" width="19.5" height="3" fill="#b5cbe8"/><rect x="3" y="4" width="15" height="1.2" fill="#7cc47c"/>
<path d="M4,8 L9,8 M4,11 L9,11 M4,14 L9,14" stroke="#8ea9c8" stroke-width="1"/>
<path d="M10,9 L22,9 L22,19 L18,19 L16,23 L14,19 L10,19Z" fill="#f0f0f0" stroke="#9a9a9a" stroke-width="1"/></svg>
<div class="t" style="left:494px;top:1015.5px;font-size:17.8px;line-height:17.8px;color:#0000ff">排序设置</div>
<svg style="position:absolute;left:585.5px;top:1010px" width="24" height="24" viewBox="0 0 24 24"><path d="M2.5,22 L13.5,11" stroke="#4f83c6" stroke-width="5.6" stroke-linecap="round"/>
<path d="M3.5,20.5 L12,12" stroke="#9cc0ee" stroke-width="1.6" stroke-linecap="round"/>
<path d="M11.2,9.5 C9.8,4.5 13.5,0.6 18.6,1.2 L15.8,4.6 L16.6,7.6 L19.6,8.4 L22.8,5.4 C23.6,10.5 19.6,14.2 14.8,12.8Z" fill="#b4b4b4" stroke="#7d7d7d" stroke-width="1"/></svg>
<div class="t" style="left:615.5px;top:1015.5px;font-size:17.8px;line-height:17.8px;color:#0000ff">列设置</div>
<div style="position:absolute;left:280px;top:1044px;width:1034px;height:1px;background:#d9d9d9"></div>
<div style="position:absolute;left:280px;top:1045px;width:1034px;height:37px;background:linear-gradient(to bottom,#f9f9f9 0,#efefef 100%)"></div>
<div style="position:absolute;left:280px;top:1082px;width:1034px;height:1px;background:#cfcfcf"></div>
<div style="position:absolute;left:325px;top:1045px;width:0px;height:37px;border-left:1px dotted #ccc"></div>
<div style="position:absolute;left:367px;top:1045px;width:0px;height:37px;border-left:1px dotted #ccc"></div>
<div style="position:absolute;left:487px;top:1045px;width:0px;height:37px;border-left:1px dotted #ccc"></div>
<div style="position:absolute;left:636px;top:1045px;width:0px;height:37px;border-left:1px dotted #ccc"></div>
<div style="position:absolute;left:735px;top:1045px;width:0px;height:37px;border-left:1px dotted #ccc"></div>
<div style="position:absolute;left:878px;top:1045px;width:0px;height:37px;border-left:1px dotted #ccc"></div>
<div style="position:absolute;left:979px;top:1045px;width:0px;height:37px;border-left:1px dotted #ccc"></div>
<div style="position:absolute;left:1121px;top:1045px;width:0px;height:37px;border-left:1px dotted #ccc"></div>
<div style="position:absolute;left:1221px;top:1045px;width:0px;height:37px;border-left:1px dotted #ccc"></div>
<div style="position:absolute;left:335px;top:1051px;width:18px;height:18px;border:2px solid #7a7a7a;border-radius:4px;background:#fff"></div>
<div class="t" style="left:327px;width:200px;text-align:center;top:1054.5px;font-size:17.8px;line-height:17.8px;color:#000">操作</div>
<div class="t" style="left:461.5px;width:200px;text-align:center;top:1054.5px;font-size:17.8px;line-height:17.8px;color:#000">分组</div>
<div class="t" style="left:585.5px;width:200px;text-align:center;top:1054.5px;font-size:17.8px;line-height:17.8px;color:#000">部门</div>
<div class="t" style="left:706.5px;width:200px;text-align:center;top:1054.5px;font-size:17.8px;line-height:17.8px;color:#000">人员<span class="n">ID</span></div>
<div class="t" style="left:828.5px;width:200px;text-align:center;top:1054.5px;font-size:17.8px;line-height:17.8px;color:#000">人员编码</div>
<div class="t" style="left:950px;width:200px;text-align:center;top:1054.5px;font-size:17.8px;line-height:17.8px;color:#000">人员名称</div>
<div class="t" style="left:1071px;width:200px;text-align:center;top:1054.5px;font-size:17.8px;line-height:17.8px;color:#000">帐套<span class="n">ID</span></div>
<div style="position:absolute;left:280px;top:1083px;width:45px;height:37px;background:linear-gradient(to bottom,#f9f9f9 0,#efefef 100%)"></div>
<div style="position:absolute;left:280px;top:1120px;width:45px;height:0px;border-top:1px dotted #ccc"></div>
<div class="t" style="left:280px;width:45px;text-align:center;top:1094.0px;font-size:17.8px;line-height:17.8px;letter-spacing:0.5px;-webkit-text-stroke:0.3px #000">1</div>
<div style="position:absolute;left:280px;top:1121px;width:45px;height:36px;background:linear-gradient(to bottom,#f9f9f9 0,#efefef 100%)"></div>
<div style="position:absolute;left:280px;top:1157px;width:45px;height:0px;border-top:1px dotted #ccc"></div>
<div class="t" style="left:280px;width:45px;text-align:center;top:1131.5px;font-size:17.8px;line-height:17.8px;letter-spacing:0.5px;-webkit-text-stroke:0.3px #000">2</div>
<div style="position:absolute;left:280px;top:1158px;width:45px;height:37px;background:linear-gradient(to bottom,#f9f9f9 0,#efefef 100%)"></div>
<div style="position:absolute;left:280px;top:1195px;width:45px;height:0px;border-top:1px dotted #ccc"></div>
<div class="t" style="left:280px;width:45px;text-align:center;top:1169.0px;font-size:17.8px;line-height:17.8px;letter-spacing:0.5px;-webkit-text-stroke:0.3px #000">3</div>
<div style="position:absolute;left:280px;top:1196px;width:45px;height:36px;background:linear-gradient(to bottom,#f9f9f9 0,#efefef 100%)"></div>
<div style="position:absolute;left:280px;top:1232px;width:45px;height:0px;border-top:1px dotted #ccc"></div>
<div class="t" style="left:280px;width:45px;text-align:center;top:1206.5px;font-size:17.8px;line-height:17.8px;letter-spacing:0.5px;-webkit-text-stroke:0.3px #000">4</div>
<div style="position:absolute;left:280px;top:1233px;width:45px;height:37px;background:linear-gradient(to bottom,#f9f9f9 0,#efefef 100%)"></div>
<div style="position:absolute;left:280px;top:1270px;width:45px;height:0px;border-top:1px dotted #ccc"></div>
<div class="t" style="left:280px;width:45px;text-align:center;top:1244.0px;font-size:17.8px;line-height:17.8px;letter-spacing:0.5px;-webkit-text-stroke:0.3px #000">5</div>
<div style="position:absolute;left:280px;top:1271px;width:45px;height:37px;background:linear-gradient(to bottom,#f9f9f9 0,#efefef 100%)"></div>
<div style="position:absolute;left:280px;top:1308px;width:45px;height:0px;border-top:1px dotted #ccc"></div>
<div class="t" style="left:280px;width:45px;text-align:center;top:1282.0px;font-size:17.8px;line-height:17.8px;letter-spacing:0.5px;-webkit-text-stroke:0.3px #000">6</div>
<div style="position:absolute;left:325px;top:1120px;width:897px;height:0px;border-top:1px dotted #ccc"></div>
<div style="position:absolute;left:325px;top:1083px;width:0px;height:37px;border-left:1px dotted #ccc"></div>
<div style="position:absolute;left:367px;top:1083px;width:0px;height:37px;border-left:1px dotted #ccc"></div>
<div style="position:absolute;left:487px;top:1083px;width:0px;height:37px;border-left:1px dotted #ccc"></div>
<div style="position:absolute;left:636px;top:1083px;width:0px;height:37px;border-left:1px dotted #ccc"></div>
<div style="position:absolute;left:735px;top:1083px;width:0px;height:37px;border-left:1px dotted #ccc"></div>
<div style="position:absolute;left:878px;top:1083px;width:0px;height:37px;border-left:1px dotted #ccc"></div>
<div style="position:absolute;left:979px;top:1083px;width:0px;height:37px;border-left:1px dotted #ccc"></div>
<div style="position:absolute;left:1121px;top:1083px;width:0px;height:37px;border-left:1px dotted #ccc"></div>
<div style="position:absolute;left:1221px;top:1083px;width:0px;height:37px;border-left:1px dotted #ccc"></div>
<div style="position:absolute;left:335px;top:1090px;width:18px;height:18px;border:2px solid #7a7a7a;border-radius:4px;background:#fff"></div>
<svg style="position:absolute;left:392px;top:1083px" width="30" height="30" viewBox="0 0 30 30"><rect x="0" y="0" width="30" height="30" fill="#f2f2f2"/>
<rect x="3.6" y="6.3" width="20" height="20" rx="1.2" fill="#fff" stroke="#6a8ca8" stroke-width="1.5"/>
<path d="M8.5,22.8 L23.5,22.8" stroke="#6a8ca8" stroke-width="1.2"/>
<path d="M8,22.5 L9.8,16.3 L21.5,4.6 C23,3.1 25.5,3.1 26.6,4.4 C27.8,5.6 27.6,7.8 26.2,9.2 L14.4,20.8Z" fill="#7ad0f3" stroke="#4e7fa3" stroke-width="1.3"/>
<path d="M9.8,16.3 L14.4,20.8" stroke="#4e7fa3" stroke-width="1.1"/>
<path d="M20.8,5.4 L25.5,10" stroke="#4e7fa3" stroke-width="1.1"/>
<path d="M11.8,16.6 L21.5,7" stroke="#4e7fa3" stroke-width=".9"/>
<path d="M8,22.5 L9.2,18.4 L12.2,21.3Z" fill="#fff"/></svg>
<div style="position:absolute;left:425px;top:1099px;width:2px;height:16px;background:#0b1240"></div>
<svg style="position:absolute;left:431px;top:1083px" width="30" height="30" viewBox="0 0 30 30"><rect x="0" y="0" width="30" height="30" fill="#f2f2f2"/>
<path d="M11.5,4 L11.5,1.3 L20,1.3 L20,4" fill="none" stroke="#c4414e" stroke-width="1.6"/>
<rect x="3" y="5.3" width="21.6" height="5.2" rx="1" fill="#f4b4b4" stroke="#c4414e" stroke-width="1.5"/>
<path d="M4.6,10.6 L6,26.8 C6.2,27.6 6.8,28 7.5,28 L15.5,28" fill="none" stroke="#c4414e" stroke-width="1.6"/>
<path d="M22.6,10.6 L22.2,17" fill="none" stroke="#c4414e" stroke-width="1.6"/>
<path d="M9.3,13 L10,25 M13.5,13 L13.7,25" stroke="#c4414e" stroke-width="1.4"/>
<path d="M17.5,13.5 L17.5,17 M20.5,13.5 L20.5,17" stroke="#c4414e" stroke-width="1.3"/>
<circle cx="22" cy="23.5" r="6" fill="#f2f2f2" stroke="#c4414e" stroke-width="1.6"/>
<path d="M19.6,21.1 L24.4,25.9 M24.4,21.1 L19.6,25.9" stroke="#c4414e" stroke-width="1.4"/></svg>
<div class="t d" style="left:493px;width:140px;overflow:hidden;top:1092.5px">销售二部</div>
<div class="t d" style="left:643px;width:90px;overflow:hidden;top:1092.5px">销售二部</div>
<div class="t d" style="left:741px;width:130px;overflow:hidden;top:1092.5px"><span class="n">6</span></div>
<div class="t d" style="left:885px;width:92px;overflow:hidden;top:1092.5px"><span class="n">A000008</span></div>
<div class="t d" style="left:985px;width:130px;overflow:hidden;top:1092.5px">孙尚香</div>
<div class="t d" style="left:1128px;width:90px;overflow:hidden;top:1092.5px"><span class="n">4</span></div>
<div style="position:absolute;left:325px;top:1158px;width:897px;height:0px;border-top:1px dotted #ccc"></div>
<div style="position:absolute;left:325px;top:1121px;width:0px;height:37px;border-left:1px dotted #ccc"></div>
<div style="position:absolute;left:367px;top:1121px;width:0px;height:37px;border-left:1px dotted #ccc"></div>
<div style="position:absolute;left:487px;top:1121px;width:0px;height:37px;border-left:1px dotted #ccc"></div>
<div style="position:absolute;left:636px;top:1121px;width:0px;height:37px;border-left:1px dotted #ccc"></div>
<div style="position:absolute;left:735px;top:1121px;width:0px;height:37px;border-left:1px dotted #ccc"></div>
<div style="position:absolute;left:878px;top:1121px;width:0px;height:37px;border-left:1px dotted #ccc"></div>
<div style="position:absolute;left:979px;top:1121px;width:0px;height:37px;border-left:1px dotted #ccc"></div>
<div style="position:absolute;left:1121px;top:1121px;width:0px;height:37px;border-left:1px dotted #ccc"></div>
<div style="position:absolute;left:1221px;top:1121px;width:0px;height:37px;border-left:1px dotted #ccc"></div>
<div style="position:absolute;left:335px;top:1128px;width:18px;height:18px;border:2px solid #7a7a7a;border-radius:4px;background:#fff"></div>
<svg style="position:absolute;left:392px;top:1121px" width="30" height="30" viewBox="0 0 30 30"><rect x="0" y="0" width="30" height="30" fill="#f2f2f2"/>
<rect x="3.6" y="6.3" width="20" height="20" rx="1.2" fill="#fff" stroke="#6a8ca8" stroke-width="1.5"/>
<path d="M8.5,22.8 L23.5,22.8" stroke="#6a8ca8" stroke-width="1.2"/>
<path d="M8,22.5 L9.8,16.3 L21.5,4.6 C23,3.1 25.5,3.1 26.6,4.4 C27.8,5.6 27.6,7.8 26.2,9.2 L14.4,20.8Z" fill="#7ad0f3" stroke="#4e7fa3" stroke-width="1.3"/>
<path d="M9.8,16.3 L14.4,20.8" stroke="#4e7fa3" stroke-width="1.1"/>
<path d="M20.8,5.4 L25.5,10" stroke="#4e7fa3" stroke-width="1.1"/>
<path d="M11.8,16.6 L21.5,7" stroke="#4e7fa3" stroke-width=".9"/>
<path d="M8,22.5 L9.2,18.4 L12.2,21.3Z" fill="#fff"/></svg>
<div style="position:absolute;left:425px;top:1137px;width:2px;height:16px;background:#0b1240"></div>
<svg style="position:absolute;left:431px;top:1121px" width="30" height="30" viewBox="0 0 30 30"><rect x="0" y="0" width="30" height="30" fill="#f2f2f2"/>
<path d="M11.5,4 L11.5,1.3 L20,1.3 L20,4" fill="none" stroke="#c4414e" stroke-width="1.6"/>
<rect x="3" y="5.3" width="21.6" height="5.2" rx="1" fill="#f4b4b4" stroke="#c4414e" stroke-width="1.5"/>
<path d="M4.6,10.6 L6,26.8 C6.2,27.6 6.8,28 7.5,28 L15.5,28" fill="none" stroke="#c4414e" stroke-width="1.6"/>
<path d="M22.6,10.6 L22.2,17" fill="none" stroke="#c4414e" stroke-width="1.6"/>
<path d="M9.3,13 L10,25 M13.5,13 L13.7,25" stroke="#c4414e" stroke-width="1.4"/>
<path d="M17.5,13.5 L17.5,17 M20.5,13.5 L20.5,17" stroke="#c4414e" stroke-width="1.3"/>
<circle cx="22" cy="23.5" r="6" fill="#f2f2f2" stroke="#c4414e" stroke-width="1.6"/>
<path d="M19.6,21.1 L24.4,25.9 M24.4,21.1 L19.6,25.9" stroke="#c4414e" stroke-width="1.4"/></svg>
<div class="t d" style="left:493px;width:140px;overflow:hidden;top:1130.5px">总部</div>
<div class="t d" style="left:643px;width:90px;overflow:hidden;top:1130.5px">销售部</div>
<div class="t d" style="left:741px;width:130px;overflow:hidden;top:1130.5px"><span class="n">5</span></div>
<div class="t d" style="left:885px;width:92px;overflow:hidden;top:1130.5px"><span class="n">A000009</span></div>
<div class="t d" style="left:985px;width:130px;overflow:hidden;top:1130.5px">李四</div>
<div class="t d" style="left:1128px;width:90px;overflow:hidden;top:1130.5px"><span class="n">4</span></div>
<div style="position:absolute;left:325px;top:1196px;width:897px;height:0px;border-top:1px dotted #ccc"></div>
<div style="position:absolute;left:325px;top:1159px;width:0px;height:37px;border-left:1px dotted #ccc"></div>
<div style="position:absolute;left:367px;top:1159px;width:0px;height:37px;border-left:1px dotted #ccc"></div>
<div style="position:absolute;left:487px;top:1159px;width:0px;height:37px;border-left:1px dotted #ccc"></div>
<div style="position:absolute;left:636px;top:1159px;width:0px;height:37px;border-left:1px dotted #ccc"></div>
<div style="position:absolute;left:735px;top:1159px;width:0px;height:37px;border-left:1px dotted #ccc"></div>
<div style="position:absolute;left:878px;top:1159px;width:0px;height:37px;border-left:1px dotted #ccc"></div>
<div style="position:absolute;left:979px;top:1159px;width:0px;height:37px;border-left:1px dotted #ccc"></div>
<div style="position:absolute;left:1121px;top:1159px;width:0px;height:37px;border-left:1px dotted #ccc"></div>
<div style="position:absolute;left:1221px;top:1159px;width:0px;height:37px;border-left:1px dotted #ccc"></div>
<div style="position:absolute;left:335px;top:1166px;width:18px;height:18px;border:2px solid #7a7a7a;border-radius:4px;background:#fff"></div>
<svg style="position:absolute;left:392px;top:1159px" width="30" height="30" viewBox="0 0 30 30"><rect x="0" y="0" width="30" height="30" fill="#f2f2f2"/>
<rect x="3.6" y="6.3" width="20" height="20" rx="1.2" fill="#fff" stroke="#6a8ca8" stroke-width="1.5"/>
<path d="M8.5,22.8 L23.5,22.8" stroke="#6a8ca8" stroke-width="1.2"/>
<path d="M8,22.5 L9.8,16.3 L21.5,4.6 C23,3.1 25.5,3.1 26.6,4.4 C27.8,5.6 27.6,7.8 26.2,9.2 L14.4,20.8Z" fill="#7ad0f3" stroke="#4e7fa3" stroke-width="1.3"/>
<path d="M9.8,16.3 L14.4,20.8" stroke="#4e7fa3" stroke-width="1.1"/>
<path d="M20.8,5.4 L25.5,10" stroke="#4e7fa3" stroke-width="1.1"/>
<path d="M11.8,16.6 L21.5,7" stroke="#4e7fa3" stroke-width=".9"/>
<path d="M8,22.5 L9.2,18.4 L12.2,21.3Z" fill="#fff"/></svg>
<div style="position:absolute;left:425px;top:1175px;width:2px;height:16px;background:#0b1240"></div>
<svg style="position:absolute;left:431px;top:1159px" width="30" height="30" viewBox="0 0 30 30"><rect x="0" y="0" width="30" height="30" fill="#f2f2f2"/>
<path d="M11.5,4 L11.5,1.3 L20,1.3 L20,4" fill="none" stroke="#c4414e" stroke-width="1.6"/>
<rect x="3" y="5.3" width="21.6" height="5.2" rx="1" fill="#f4b4b4" stroke="#c4414e" stroke-width="1.5"/>
<path d="M4.6,10.6 L6,26.8 C6.2,27.6 6.8,28 7.5,28 L15.5,28" fill="none" stroke="#c4414e" stroke-width="1.6"/>
<path d="M22.6,10.6 L22.2,17" fill="none" stroke="#c4414e" stroke-width="1.6"/>
<path d="M9.3,13 L10,25 M13.5,13 L13.7,25" stroke="#c4414e" stroke-width="1.4"/>
<path d="M17.5,13.5 L17.5,17 M20.5,13.5 L20.5,17" stroke="#c4414e" stroke-width="1.3"/>
<circle cx="22" cy="23.5" r="6" fill="#f2f2f2" stroke="#c4414e" stroke-width="1.6"/>
<path d="M19.6,21.1 L24.4,25.9 M24.4,21.1 L19.6,25.9" stroke="#c4414e" stroke-width="1.4"/></svg>
<div class="t d" style="left:493px;width:140px;overflow:hidden;top:1168.5px">销售一部</div>
<div class="t d" style="left:643px;width:90px;overflow:hidden;top:1168.5px">销售一部</div>
<div class="t d" style="left:741px;width:130px;overflow:hidden;top:1168.5px"><span class="n">2</span></div>
<div class="t d" style="left:885px;width:92px;overflow:hidden;top:1168.5px"><span class="n">A000012</span></div>
<div class="t d" style="left:985px;width:130px;overflow:hidden;top:1168.5px">张翼德</div>
<div class="t d" style="left:1128px;width:90px;overflow:hidden;top:1168.5px"><span class="n">4</span></div>
<div style="position:absolute;left:325px;top:1234px;width:897px;height:0px;border-top:1px dotted #ccc"></div>
<div style="position:absolute;left:325px;top:1197px;width:0px;height:37px;border-left:1px dotted #ccc"></div>
<div style="position:absolute;left:367px;top:1197px;width:0px;height:37px;border-left:1px dotted #ccc"></div>
<div style="position:absolute;left:487px;top:1197px;width:0px;height:37px;border-left:1px dotted #ccc"></div>
<div style="position:absolute;left:636px;top:1197px;width:0px;height:37px;border-left:1px dotted #ccc"></div>
<div style="position:absolute;left:735px;top:1197px;width:0px;height:37px;border-left:1px dotted #ccc"></div>
<div style="position:absolute;left:878px;top:1197px;width:0px;height:37px;border-left:1px dotted #ccc"></div>
<div style="position:absolute;left:979px;top:1197px;width:0px;height:37px;border-left:1px dotted #ccc"></div>
<div style="position:absolute;left:1121px;top:1197px;width:0px;height:37px;border-left:1px dotted #ccc"></div>
<div style="position:absolute;left:1221px;top:1197px;width:0px;height:37px;border-left:1px dotted #ccc"></div>
<div style="position:absolute;left:335px;top:1204px;width:18px;height:18px;border:2px solid #7a7a7a;border-radius:4px;background:#fff"></div>
<svg style="position:absolute;left:392px;top:1197px" width="30" height="30" viewBox="0 0 30 30"><rect x="0" y="0" width="30" height="30" fill="#f2f2f2"/>
<rect x="3.6" y="6.3" width="20" height="20" rx="1.2" fill="#fff" stroke="#6a8ca8" stroke-width="1.5"/>
<path d="M8.5,22.8 L23.5,22.8" stroke="#6a8ca8" stroke-width="1.2"/>
<path d="M8,22.5 L9.8,16.3 L21.5,4.6 C23,3.1 25.5,3.1 26.6,4.4 C27.8,5.6 27.6,7.8 26.2,9.2 L14.4,20.8Z" fill="#7ad0f3" stroke="#4e7fa3" stroke-width="1.3"/>
<path d="M9.8,16.3 L14.4,20.8" stroke="#4e7fa3" stroke-width="1.1"/>
<path d="M20.8,5.4 L25.5,10" stroke="#4e7fa3" stroke-width="1.1"/>
<path d="M11.8,16.6 L21.5,7" stroke="#4e7fa3" stroke-width=".9"/>
<path d="M8,22.5 L9.2,18.4 L12.2,21.3Z" fill="#fff"/></svg>
<div style="position:absolute;left:425px;top:1213px;width:2px;height:16px;background:#0b1240"></div>
<svg style="position:absolute;left:431px;top:1197px" width="30" height="30" viewBox="0 0 30 30"><rect x="0" y="0" width="30" height="30" fill="#f2f2f2"/>
<path d="M11.5,4 L11.5,1.3 L20,1.3 L20,4" fill="none" stroke="#c4414e" stroke-width="1.6"/>
<rect x="3" y="5.3" width="21.6" height="5.2" rx="1" fill="#f4b4b4" stroke="#c4414e" stroke-width="1.5"/>
<path d="M4.6,10.6 L6,26.8 C6.2,27.6 6.8,28 7.5,28 L15.5,28" fill="none" stroke="#c4414e" stroke-width="1.6"/>
<path d="M22.6,10.6 L22.2,17" fill="none" stroke="#c4414e" stroke-width="1.6"/>
<path d="M9.3,13 L10,25 M13.5,13 L13.7,25" stroke="#c4414e" stroke-width="1.4"/>
<path d="M17.5,13.5 L17.5,17 M20.5,13.5 L20.5,17" stroke="#c4414e" stroke-width="1.3"/>
<circle cx="22" cy="23.5" r="6" fill="#f2f2f2" stroke="#c4414e" stroke-width="1.6"/>
<path d="M19.6,21.1 L24.4,25.9 M24.4,21.1 L19.6,25.9" stroke="#c4414e" stroke-width="1.4"/></svg>
<div class="t d" style="left:493px;width:140px;overflow:hidden;top:1206.5px">行政办</div>
<div class="t d" style="left:643px;width:90px;overflow:hidden;top:1206.5px">销售一部</div>
<div class="t d" style="left:741px;width:130px;overflow:hidden;top:1206.5px"><span class="n">4</span></div>
<div class="t d" style="left:885px;width:92px;overflow:hidden;top:1206.5px"><span class="n">A000010</span></div>
<div class="t d" style="left:985px;width:130px;overflow:hidden;top:1206.5px">司马懿</div>
<div class="t d" style="left:1128px;width:90px;overflow:hidden;top:1206.5px"><span class="n">4</span></div>
<div style="position:absolute;left:325px;top:1272px;width:897px;height:0px;border-top:1px dotted #ccc"></div>
<div style="position:absolute;left:325px;top:1235px;width:0px;height:37px;border-left:1px dotted #ccc"></div>
<div style="position:absolute;left:367px;top:1235px;width:0px;height:37px;border-left:1px dotted #ccc"></div>
<div style="position:absolute;left:487px;top:1235px;width:0px;height:37px;border-left:1px dotted #ccc"></div>
<div style="position:absolute;left:636px;top:1235px;width:0px;height:37px;border-left:1px dotted #ccc"></div>
<div style="position:absolute;left:735px;top:1235px;width:0px;height:37px;border-left:1px dotted #ccc"></div>
<div style="position:absolute;left:878px;top:1235px;width:0px;height:37px;border-left:1px dotted #ccc"></div>
<div style="position:absolute;left:979px;top:1235px;width:0px;height:37px;border-left:1px dotted #ccc"></div>
<div style="position:absolute;left:1121px;top:1235px;width:0px;height:37px;border-left:1px dotted #ccc"></div>
<div style="position:absolute;left:1221px;top:1235px;width:0px;height:37px;border-left:1px dotted #ccc"></div>
<div style="position:absolute;left:335px;top:1242px;width:18px;height:18px;border:2px solid #7a7a7a;border-radius:4px;background:#fff"></div>
<svg style="position:absolute;left:392px;top:1235px" width="30" height="30" viewBox="0 0 30 30"><rect x="0" y="0" width="30" height="30" fill="#f2f2f2"/>
<rect x="3.6" y="6.3" width="20" height="20" rx="1.2" fill="#fff" stroke="#6a8ca8" stroke-width="1.5"/>
<path d="M8.5,22.8 L23.5,22.8" stroke="#6a8ca8" stroke-width="1.2"/>
<path d="M8,22.5 L9.8,16.3 L21.5,4.6 C23,3.1 25.5,3.1 26.6,4.4 C27.8,5.6 27.6,7.8 26.2,9.2 L14.4,20.8Z" fill="#7ad0f3" stroke="#4e7fa3" stroke-width="1.3"/>
<path d="M9.8,16.3 L14.4,20.8" stroke="#4e7fa3" stroke-width="1.1"/>
<path d="M20.8,5.4 L25.5,10" stroke="#4e7fa3" stroke-width="1.1"/>
<path d="M11.8,16.6 L21.5,7" stroke="#4e7fa3" stroke-width=".9"/>
<path d="M8,22.5 L9.2,18.4 L12.2,21.3Z" fill="#fff"/></svg>
<div style="position:absolute;left:425px;top:1251px;width:2px;height:16px;background:#0b1240"></div>
<svg style="position:absolute;left:431px;top:1235px" width="30" height="30" viewBox="0 0 30 30"><rect x="0" y="0" width="30" height="30" fill="#f2f2f2"/>
<path d="M11.5,4 L11.5,1.3 L20,1.3 L20,4" fill="none" stroke="#c4414e" stroke-width="1.6"/>
<rect x="3" y="5.3" width="21.6" height="5.2" rx="1" fill="#f4b4b4" stroke="#c4414e" stroke-width="1.5"/>
<path d="M4.6,10.6 L6,26.8 C6.2,27.6 6.8,28 7.5,28 L15.5,28" fill="none" stroke="#c4414e" stroke-width="1.6"/>
<path d="M22.6,10.6 L22.2,17" fill="none" stroke="#c4414e" stroke-width="1.6"/>
<path d="M9.3,13 L10,25 M13.5,13 L13.7,25" stroke="#c4414e" stroke-width="1.4"/>
<path d="M17.5,13.5 L17.5,17 M20.5,13.5 L20.5,17" stroke="#c4414e" stroke-width="1.3"/>
<circle cx="22" cy="23.5" r="6" fill="#f2f2f2" stroke="#c4414e" stroke-width="1.6"/>
<path d="M19.6,21.1 L24.4,25.9 M24.4,21.1 L19.6,25.9" stroke="#c4414e" stroke-width="1.4"/></svg>
<div class="t d" style="left:493px;width:140px;overflow:hidden;top:1244.5px"></div>
<div class="t d" style="left:643px;width:90px;overflow:hidden;top:1244.5px"></div>
<div class="t d" style="left:741px;width:130px;overflow:hidden;top:1244.5px"><span class="n">1</span></div>
<div class="t d" style="left:885px;width:92px;overflow:hidden;top:1244.5px"><span class="n">fdsafdsa</span></div>
<div class="t d" style="left:985px;width:130px;overflow:hidden;top:1244.5px">张三</div>
<div class="t d" style="left:1128px;width:90px;overflow:hidden;top:1244.5px"><span class="n">4</span></div>
<div style="position:absolute;left:325px;top:1310px;width:897px;height:0px;border-top:1px dotted #ccc"></div>
<div style="position:absolute;left:325px;top:1273px;width:0px;height:37px;border-left:1px dotted #ccc"></div>
<div style="position:absolute;left:367px;top:1273px;width:0px;height:37px;border-left:1px dotted #ccc"></div>
<div style="position:absolute;left:487px;top:1273px;width:0px;height:37px;border-left:1px dotted #ccc"></div>
<div style="position:absolute;left:636px;top:1273px;width:0px;height:37px;border-left:1px dotted #ccc"></div>
<div style="position:absolute;left:735px;top:1273px;width:0px;height:37px;border-left:1px dotted #ccc"></div>
<div style="position:absolute;left:878px;top:1273px;width:0px;height:37px;border-left:1px dotted #ccc"></div>
<div style="position:absolute;left:979px;top:1273px;width:0px;height:37px;border-left:1px dotted #ccc"></div>
<div style="position:absolute;left:1121px;top:1273px;width:0px;height:37px;border-left:1px dotted #ccc"></div>
<div style="position:absolute;left:1221px;top:1273px;width:0px;height:37px;border-left:1px dotted #ccc"></div>
<div style="position:absolute;left:335px;top:1280px;width:18px;height:18px;border:2px solid #7a7a7a;border-radius:4px;background:#fff"></div>
<svg style="position:absolute;left:392px;top:1273px" width="30" height="30" viewBox="0 0 30 30"><rect x="0" y="0" width="30" height="30" fill="#f2f2f2"/>
<rect x="3.6" y="6.3" width="20" height="20" rx="1.2" fill="#fff" stroke="#6a8ca8" stroke-width="1.5"/>
<path d="M8.5,22.8 L23.5,22.8" stroke="#6a8ca8" stroke-width="1.2"/>
<path d="M8,22.5 L9.8,16.3 L21.5,4.6 C23,3.1 25.5,3.1 26.6,4.4 C27.8,5.6 27.6,7.8 26.2,9.2 L14.4,20.8Z" fill="#7ad0f3" stroke="#4e7fa3" stroke-width="1.3"/>
<path d="M9.8,16.3 L14.4,20.8" stroke="#4e7fa3" stroke-width="1.1"/>
<path d="M20.8,5.4 L25.5,10" stroke="#4e7fa3" stroke-width="1.1"/>
<path d="M11.8,16.6 L21.5,7" stroke="#4e7fa3" stroke-width=".9"/>
<path d="M8,22.5 L9.2,18.4 L12.2,21.3Z" fill="#fff"/></svg>
<div style="position:absolute;left:425px;top:1289px;width:2px;height:16px;background:#0b1240"></div>
<svg style="position:absolute;left:431px;top:1273px" width="30" height="30" viewBox="0 0 30 30"><rect x="0" y="0" width="30" height="30" fill="#f2f2f2"/>
<path d="M11.5,4 L11.5,1.3 L20,1.3 L20,4" fill="none" stroke="#c4414e" stroke-width="1.6"/>
<rect x="3" y="5.3" width="21.6" height="5.2" rx="1" fill="#f4b4b4" stroke="#c4414e" stroke-width="1.5"/>
<path d="M4.6,10.6 L6,26.8 C6.2,27.6 6.8,28 7.5,28 L15.5,28" fill="none" stroke="#c4414e" stroke-width="1.6"/>
<path d="M22.6,10.6 L22.2,17" fill="none" stroke="#c4414e" stroke-width="1.6"/>
<path d="M9.3,13 L10,25 M13.5,13 L13.7,25" stroke="#c4414e" stroke-width="1.4"/>
<path d="M17.5,13.5 L17.5,17 M20.5,13.5 L20.5,17" stroke="#c4414e" stroke-width="1.3"/>
<circle cx="22" cy="23.5" r="6" fill="#f2f2f2" stroke="#c4414e" stroke-width="1.6"/>
<path d="M19.6,21.1 L24.4,25.9 M24.4,21.1 L19.6,25.9" stroke="#c4414e" stroke-width="1.4"/></svg>
<div class="t d" style="left:493px;width:140px;overflow:hidden;top:1282.5px">行政办</div>
<div class="t d" style="left:643px;width:90px;overflow:hidden;top:1282.5px">销售一部</div>
<div class="t d" style="left:741px;width:130px;overflow:hidden;top:1282.5px"><span class="n">3</span></div>
<div class="t d" style="left:885px;width:92px;overflow:hidden;top:1282.5px"><span class="n">A000011</span></div>
<div class="t d" style="left:985px;width:130px;overflow:hidden;top:1282.5px">赵云</div>
<div class="t d" style="left:1128px;width:90px;overflow:hidden;top:1282.5px"><span class="n">4</span></div>
</body></html>
